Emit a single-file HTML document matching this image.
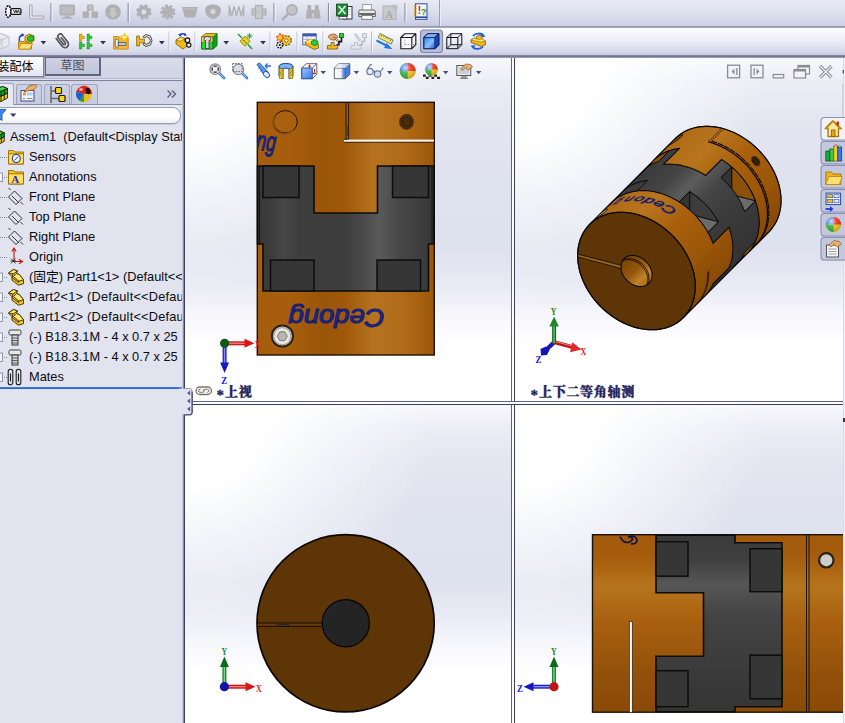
<!DOCTYPE html>
<html lang="zh">
<head>
<meta charset="utf-8">
<title>Assem1 - SolidWorks</title>
<style>
*{box-sizing:border-box;margin:0;padding:0}
html,body{width:845px;height:723px;overflow:hidden;background:#fff}
body{position:relative;font-family:"Liberation Sans","Noto Sans CJK SC",sans-serif;font-size:13px;color:#101010}
.abs{position:absolute}
#tb1{left:0;top:0;width:845px;height:27px;background:linear-gradient(#e7e9f3 0,#dfe2ef 40%,#d3d6e8 85%,#cdd0e4 100%)}
#tb1l{left:0;top:0;width:440px;height:27px;background:linear-gradient(#e8eaf4 0,#dcdfee 40%,#cbcfe3 85%,#c2c6dc 100%)}
#tb1b{left:0;top:26px;width:845px;height:2px;background:linear-gradient(#a9abc0,#85879a 50%,#c9cbda)}
#tb2{left:0;top:28px;width:845px;height:28px;background:linear-gradient(#fdfdff 0,#eceef7 45%,#d5d8e9 85%,#c6c9de 100%)}
#tb2b{left:0;top:55px;width:845px;height:3px;background:linear-gradient(#8a8da8,#6f728f 60%,#b5b8cf)}
#left{left:0;top:58px;width:183px;height:665px;background:#e1e4ee;overflow:hidden}
#leftedge{left:182px;top:58px;width:3px;height:665px;background:linear-gradient(90deg,#d9dcea 0,#b4b7cc 35%,#6d7090 60%,#3d405c 80%,#3a3d58 100%)}
.vp{overflow:hidden;background:radial-gradient(circle 250px at 0 0,#fff 0,rgba(255,255,255,.95) 35%,rgba(255,255,255,.55) 60%,rgba(255,255,255,0) 100%),linear-gradient(180deg,#f7f8fc 0,#eceef6 7%,#e3e6f1 18%,#dfe2ef 35%,#dee1ee 55%,#e8eaf4 66%,#f8f8fc 76%,#fff 84%)}
#vp1{left:185px;top:58px;width:326px;height:343px}
#vp2{left:515px;top:58px;width:330px;height:343px}
#vp3{left:185px;top:405px;width:326px;height:318px}
#vp4{left:515px;top:405px;width:330px;height:318px}
.sep{background:#fff}
.trow{position:absolute;left:0;height:20px;line-height:20px;white-space:nowrap;font-size:12.8px;color:#0a0a14;letter-spacing:0}
.vlabel{position:absolute;font-family:"Liberation Serif","Noto Serif CJK SC",serif;font-weight:900;font-size:13px;letter-spacing:0.7px;color:#24245e;white-space:nowrap;line-height:16px;height:16px;-webkit-text-stroke:0.35px #24245e}
.ast{display:inline-block;font-size:15px;position:relative;top:3.5px;letter-spacing:1px}
</style>
</head>
<body>
<!-- ===== toolbars ===== -->
<div id="tb1" class="abs"></div>
<div id="tb1l" class="abs"></div>
<div id="tb1b" class="abs"></div>
<div id="tb2" class="abs"></div>
<div id="tb2b" class="abs"></div>
<svg class="abs" style="left:0;top:0" width="845" height="27" viewBox="0 0 845 27">
<g transform="translate(4.5 5)"><ellipse cx="3.8" cy="6.5" rx="2.6" ry="5.8" fill="#f4f4f8" stroke="#111" stroke-width="1.4" stroke-dasharray="2.2 0.8"/>
<rect x="6.4" y="3.6" width="10" height="5.8" rx="1.2" fill="#f4f4f8" stroke="#111" stroke-width="1.3"/>
<path d="M9 5.2l1.200 2.600l1.200-2.600l1.200 2.600l1.200-2.600l1.200 2.600" stroke="#111" stroke-width="0.9" fill="none"/></g>
<g transform="translate(28 4)"><path d="M1.5 1h2.600v11h11.500v2.800h-14.100z" fill="#e2e3ec" stroke="#aaa" stroke-width="1"/></g>
<path d="M51 3V22" stroke="#8f8f9c" stroke-width="1.2"/><path d="M52.2 3V22" stroke="#f4f5fa" stroke-width="1"/>
<g transform="translate(59 4)"><rect x="0.5" y="0.5" width="15.5" height="11" rx="1" fill="#b0b0b3"/><rect x="2.5" y="2.3" width="11.5" height="7.2" fill="#bcbcbe"/><rect x="6" y="11.500" width="4.500" height="2" fill="#b0b0b3"/><rect x="3" y="13.300" width="10.500" height="1.600" fill="#b0b0b3"/></g>
<g transform="translate(82 4)"><g fill="#b0b0b3"><rect x="5" y="0.5" width="6.500" height="6" rx="1"/><rect x="0.500" y="7.500" width="6.500" height="6.500" rx="1"/><rect x="9.500" y="7.500" width="6.500" height="6.500" rx="1"/><path d="M7 6l-2.500 2 M9.500 6l2.500 2" stroke="#b0b0b3" stroke-width="1.600"/></g><rect x="6.500" y="2" width="3.500" height="3" fill="#c4c4c6"/></g>
<g transform="translate(105 4)"><circle cx="8" cy="8" r="7.8" fill="#b0b0b3"/><path d="M5.500 4h5v5h2.500l-5 5l-5-5h2.500z" fill="#c6c6c8"/></g>
<path d="M128.2 3V22" stroke="#8f8f9c" stroke-width="1.2"/><path d="M129.39999999999998 3V22" stroke="#f4f5fa" stroke-width="1"/>
<g transform="translate(136 4)"><circle cx="7.800" cy="8" r="5.400" fill="none" stroke="#b0b0b3" stroke-width="4.600" stroke-dasharray="2.600 1.640"/><circle cx="7.800" cy="8" r="4.300" fill="none" stroke="#b0b0b3" stroke-width="3.600"/></g>
<g transform="translate(160 4)"><circle cx="7.800" cy="8" r="5.600" fill="#b0b0b3" stroke="#b0b0b3" stroke-width="4" stroke-dasharray="2.400 1.500"/><circle cx="6" cy="6" r="1" fill="#bdbdc0"/><circle cx="10" cy="9" r="1" fill="#bdbdc0"/><circle cx="6.500" cy="11" r="1" fill="#bdbdc0"/></g>
<g transform="translate(182 7)"><path d="M0 0h16l-2.800 10.500h-10.400z" fill="#b0b0b3"/><path d="M1.500 2h13" stroke="#c2c2c4" stroke-width="1"/></g>
<g transform="translate(205 4)"><path d="M8 0.500c5 0 8 2.600 8 6c0 4-4.500 8.500-8 8.500s-8-4.500-8-8.500c0-3.400 3-6 8-6z" fill="#b0b0b3"/><path d="M8 5a2.600 2.600 0 0 1 2.600 2.600c0 1.600-1.300 2.800-2.600 2.800s-2.600-1.200-2.600-2.800a2.600 2.600 0 0 1 2.600-2.600z" fill="#d8d8dc"/></g>
<g transform="translate(228.5 5.5)"><path d="M0.800 0v11 M0.800 1l2.400 9.500l2.400-9.500l2.400 9.500l2.400-9.500l2.400 9.500l2.400-9.500 M15.200 0v11" stroke="#b0b0b3" stroke-width="1.300" fill="none"/></g>
<g transform="translate(251.5 5)"><rect x="4" y="0.500" width="7" height="13" fill="#c8c8ca" stroke="#b0b0b3" stroke-width="1.200"/><rect x="0.600" y="4" width="3.400" height="6" fill="#c8c8ca" stroke="#b0b0b3" stroke-width="1.200"/><rect x="11" y="4" width="3.400" height="6" fill="#c8c8ca" stroke="#b0b0b3" stroke-width="1.200"/><path d="M0 7h15.500" stroke="#b0b0b3" stroke-width="0.800" stroke-dasharray="2 1"/></g>
<path d="M274 3V22" stroke="#8f8f9c" stroke-width="1.2"/><path d="M275.2 3V22" stroke="#f4f5fa" stroke-width="1"/>
<g transform="translate(282 4)"><circle cx="10" cy="6" r="5" fill="#c4c4c8" stroke="#b0b0b3" stroke-width="2"/><path d="M6 10l-5 5" stroke="#b0b0b3" stroke-width="2.800" stroke-linecap="round"/></g>
<g transform="translate(305 4)"><g fill="#b0b0b3"><rect x="2.500" y="1" width="3.600" height="5" rx="1"/><rect x="10" y="1" width="3.600" height="5" rx="1"/><path d="M1.800 5.500h5l1 9h-7z M9.300 5.500h5l1.500 9h-7z"/><rect x="6.500" y="6" width="3" height="3.500"/></g></g>
<path d="M328.5 3V22" stroke="#8f8f9c" stroke-width="1.2"/><path d="M329.7 3V22" stroke="#f4f5fa" stroke-width="1"/>
<g transform="translate(336 3.5)"><rect x="7" y="3" width="9" height="12.500" fill="#fff" stroke="#222" stroke-width="0.900"/><path d="M9 6h5.500 M9 8.500h5.500 M9 11h5.500" stroke="#c8a8d8" stroke-width="0.800"/>
<rect x="0.600" y="0.600" width="10.800" height="11.800" fill="#1f8a3a" stroke="#0a4a1a" stroke-width="0.900"/>
<path d="M2.500 2.500l7 8 M9.500 2.500l-7 8" stroke="#d8f8d8" stroke-width="1.700"/><rect x="3" y="13" width="8" height="2.500" fill="#fff" stroke="#222" stroke-width="0.700"/></g>
<g transform="translate(358.8 4)"><rect x="4" y="0.500" width="8.500" height="6" fill="#fff" stroke="#888" stroke-width="0.800"/>
<path d="M1.500 6h13.500a1.500 1.500 0 0 1 1.500 1.500v5h-16.500v-5a1.500 1.500 0 0 1 1.500-1.500z" fill="#e8e8ec" stroke="#555" stroke-width="0.900"/>
<path d="M0.500 10h15.500" stroke="#333" stroke-width="1.400"/><rect x="3" y="11.500" width="10.500" height="3.800" fill="#fafafa" stroke="#666" stroke-width="0.800"/></g>
<g transform="translate(382.5 4)"><rect x="0.500" y="2" width="13" height="13.500" fill="#c9c9cc" stroke="#b0b0b3" stroke-width="1"/><text x="3" y="13.500" font-family="Liberation Serif,serif" font-size="10.500" fill="#9a9a9e">A</text><path d="M10 0.500l5 5 M15 0.500l-5 5 M12.500 0v6 M9.500 3h6" stroke="#b4b4b8" stroke-width="0.700"/></g>
<path d="M405 3V22" stroke="#8f8f9c" stroke-width="1.2"/><path d="M406.2 3V22" stroke="#f4f5fa" stroke-width="1"/>
<g transform="translate(413.5 3)"><rect x="2" y="0.800" width="11.500" height="15.500" fill="#f4f6ff" stroke="#2a4a9a" stroke-width="1"/><path d="M2 14.200h11.500" stroke="#2a4a9a" stroke-width="1.600"/>
<path d="M0.600 3h2.400 M0.600 5.500h2.400 M0.600 8h2.400 M0.600 10.500h2.400 M0.600 13h2.400" stroke="#c88a10" stroke-width="1.300"/>
<text x="4.200" y="10.500" font-family="Liberation Sans,sans-serif" font-weight="bold" font-size="10.500" fill="#e01818">!</text><text x="7.300" y="12" font-family="Liberation Sans,sans-serif" font-weight="bold" font-size="9.500" fill="#18a018">?</text></g>
<path d="M439.500 0V26" stroke="#9c9fb8" stroke-width="1"/><path d="M440.500 0V26" stroke="#eceef6" stroke-width="1"/>
</svg>
<svg class="abs" style="left:0;top:28px" width="845" height="28" viewBox="0 28 845 28">
<g transform="translate(-6 33)"><g stroke="#c2c2c8" stroke-width="1" fill="#e9e9ee"><path d="M0 4l7-3.5l8 3v8.5l-7 4l-8-3.5z"/><path d="M0 4l8 3l7-3.5 M8 7v9" fill="none"/><rect x="2.5" y="7" width="3.5" height="4" fill="#d4d4da"/></g></g>
<g transform="translate(18 33)"><path d="M0.5 8.5h5.5l1.2 1.5h6.3v6h-13z" fill="#f0b020" stroke="#a87408" stroke-width="0.8"/>
<path d="M0.5 16l2.5-5.5h11.5l-2.5 5.5z" fill="#ffdf70" stroke="#c08a10" stroke-width="0.8"/>
<path d="M7 3.5l4-2.5l5 1.8v5l-4 2.6l-5-2z" fill="#f0c020" stroke="#7a5a08" stroke-width="0.8"/>
<path d="M9.5 4.2l3-1.6l3 1.2v3l-3 1.7l-3-1.2z" fill="#20c830" stroke="#0a6a14" stroke-width="0.7"/>
<path d="M1.5 8c-0.8-3.5 0.5-5.5 3.2-6.2" stroke="#1a3ae0" stroke-width="1.5" fill="none"/><path d="M3.6 0l3 2l-3 2z" fill="#1a3ae0"/></g>
<path d="M40.6 41h5.6l-2.8 3.4z" fill="#2e2e5e"/>
<g transform="translate(55 33)"><g transform="rotate(-38 7.5 8)"><path d="M4 1.5v10.5a3.5 3.5 0 0 0 7 0v-9a2.4 2.4 0 0 0-4.8 0v8a1.2 1.2 0 0 0 2.4 0v-7" fill="none" stroke="#2a2a2a" stroke-width="1.5"/><path d="M4 1.5v10.5a3.5 3.5 0 0 0 7 0v-9a2.4 2.4 0 0 0-4.8 0v8a1.2 1.2 0 0 0 2.4 0v-7" fill="none" stroke="#9a9a9a" stroke-width="0.5"/></g></g>
<g transform="translate(78.5 33)"><g><path d="M1 1h2.2v2.2h2.6v2.4h-2.6v2.4h-2.2z" fill="#f0b818" stroke="#8a6408" stroke-width="0.5"/>
<path d="M8.6 1h2.2v2.2h2.6v2.4h-2.6v2.4h-2.2z" fill="#20d030" stroke="#0a7a14" stroke-width="0.5"/>
<path d="M1 9h2.2v2.2h2.6v2.4h-2.6v2.4h-2.2z" fill="#20d030" stroke="#0a7a14" stroke-width="0.5"/>
<path d="M8.6 9h2.2v2.2h2.6v2.4h-2.6v2.4h-2.2z" fill="#20d030" stroke="#0a7a14" stroke-width="0.5"/></g></g>
<path d="M100.2 41h5.6l-2.8 3.4z" fill="#2e2e5e"/>
<g transform="translate(113 33)"><path d="M0.6 3.5h5l1.2 1.6h8.4v11h-14.6z" fill="#f6b838" stroke="#c88a10" stroke-width="0.9"/>
<rect x="2.2" y="6.2" width="3.2" height="8" rx="1" fill="#e8e8ee" stroke="#555" stroke-width="0.8"/>
<rect x="5.4" y="9.5" width="7.6" height="3" fill="#c8c8d0" stroke="#555" stroke-width="0.8"/>
<path d="M11.5 0.2l1.2 2.6l2.8 0.3l-2.1 1.9l0.6 2.8l-2.5-1.5l-2.5 1.5l0.6-2.8l-2.1-1.9l2.8-0.3z" fill="#fff060" stroke="#e8a800" stroke-width="0.7"/></g>
<g transform="translate(136 33)"><path d="M0.6 3h2.8v3.2h5v3.6h-5v3.2h-2.8z" fill="#f0b818" stroke="#8a6408" stroke-width="0.8"/>
<path d="M10 1.5l4.5 1.5l1.5 4.5l-1.5 4.5l-4.5 1.5l-3-2l1-1.5a3.6 3.6 0 1 0 0-5l-1-1.5z" fill="#e6e6ea" stroke="#3a3a3a" stroke-width="0.9"/></g>
<path d="M159 41h5.6l-2.8 3.4z" fill="#2e2e5e"/>
<path d="M169 31.5V52" stroke="#b9bcd2" stroke-width="1"/><path d="M170 31.5V52" stroke="#f6f7fb" stroke-width="1"/>
<g transform="translate(175 33)"><path d="M1 7l5-3l4 1.5l-1 2.5l3 1l0 4l-4 3l-7-5z" fill="#f0b818" stroke="#7a5808" stroke-width="0.8"/>
<path d="M1 7l5-3l4 1.5l-4.5 2.8z" fill="#ffe070" stroke="#7a5808" stroke-width="0.6"/>
<circle cx="12.5" cy="7.2" r="2.3" fill="#f4f4f4" stroke="#111" stroke-width="1.1"/><circle cx="13.8" cy="12" r="2.1" fill="#f4f4f4" stroke="#111" stroke-width="1.1"/>
<path d="M4.5 2.8c1.5-2 4-2.4 6-1.2" stroke="#1a3ae0" stroke-width="1.3" fill="none"/><path d="M9.5 0l2.6 2.2l-3.2 0.8z" fill="#1a3ae0"/><path d="M6 0.2l-3 1.6l2.6 1.8z" fill="#1a3ae0"/></g>
<path d="M195 31.5V52" stroke="#b9bcd2" stroke-width="1"/><path d="M196 31.5V52" stroke="#f6f7fb" stroke-width="1"/>
<g transform="translate(201 33)"><path d="M0.5 4l4-3.5h11.5v12l-4 3.5h-11.5z" fill="#f0c020" stroke="#7a5a08" stroke-width="0.8"/>
<path d="M0.5 4h11.5v12h-11.5z" fill="#20d830" stroke="#0a6a14" stroke-width="0.8"/>
<path d="M0.5 4h11.5v5h-11.5z" fill="#ffe060" stroke="#7a5a08" stroke-width="0.6"/>
<path d="M12 4l4-3.5v12l-4 3.5z" fill="#10a020" stroke="#0a6a14" stroke-width="0.6"/>
<path d="M3 5.5a3.3 2.2 0 0 1 6.6 0v2h-1.6v8h-3.4v-8h-1.6z" fill="#d8d8dc" stroke="#333" stroke-width="0.8"/></g>
<path d="M223.4 41h5.6l-2.8 3.4z" fill="#2e2e5e"/>
<g transform="translate(237 33)"><path d="M1 1l4 4 M11 11.5l4 4.5" stroke="#10a020" stroke-width="1.3"/>
<path d="M8 3.2l5 5l-5 5l-5-5z" fill="#f4d020" stroke="#8a7408" stroke-width="0.9"/>
<path d="M6.3 7l1.3 1.3 M8.4 9.1l1.3 1.3" stroke="#10a020" stroke-width="1.2"/>
<path d="M12.5 0v6 M9.5 3h6 M10.4 0.9l4.2 4.2 M14.6 0.9l-4.2 4.2" stroke="#10a020" stroke-width="0.8"/></g>
<path d="M260.2 41h5.6l-2.8 3.4z" fill="#2e2e5e"/>
<path d="M270 31.5V52" stroke="#b9bcd2" stroke-width="1"/><path d="M271 31.5V52" stroke="#f6f7fb" stroke-width="1"/>
<g transform="translate(276 33)"><circle cx="10.5" cy="7.5" r="4.6" fill="#f0b818" stroke="#7a5808" stroke-width="1.6" stroke-dasharray="2 1.2"/><circle cx="10.5" cy="7.5" r="4" fill="#f4c428"/><circle cx="10.5" cy="7.5" r="1.6" fill="#fff" stroke="#7a5808" stroke-width="0.8"/>
<circle cx="3.8" cy="12" r="2.9" fill="#f0f0f0" stroke="#111" stroke-width="1.5" stroke-dasharray="1.6 1"/><circle cx="3.8" cy="12" r="1" fill="#111"/>
<path d="M4 0l1 2.4l2.6-0.6l-1.4 2.2l1.8 1.8l-2.6 0.2l-0.4 2.6l-1.6-2l-2.4 1l1-2.4l-2-1.6l2.6-0.4z" fill="#ffd020" stroke="#e83818" stroke-width="0.8"/></g>
<path d="M297 31.5V52" stroke="#b9bcd2" stroke-width="1"/><path d="M298 31.5V52" stroke="#f6f7fb" stroke-width="1"/>
<g transform="translate(302 33)"><rect x="0.8" y="0.8" width="13.4" height="11" fill="#f2f4fa" stroke="#4a5a8a" stroke-width="0.9"/><rect x="0.8" y="0.8" width="13.4" height="2.6" fill="#3a5ab0"/>
<path d="M0.8 6.5h13 M0.8 9.2h13 M5 3.4v8.4" stroke="#9aa4c4" stroke-width="0.7"/>
<path d="M3.5 9l5-3l4 1.5l4 4.5v3l-4.5 1.5l-8.5-5z" fill="#f0b818" stroke="#7a5808" stroke-width="0.8"/>
<path d="M3.5 9l5-3l4 1.5l-4.5 2.8z" fill="#ffe070"/>
<path d="M9.5 8.2l3-1.4l3.4 1.4v3l-3 1.5l-3.4-1.5z" fill="#20d030" stroke="#0a6a14" stroke-width="0.7"/></g>
<path d="M323 31.5V52" stroke="#b9bcd2" stroke-width="1"/><path d="M324 31.5V52" stroke="#f6f7fb" stroke-width="1"/>
<g transform="translate(327.5 33)"><path d="M0.5 3.5c2-2.5 5-3 8-2l2 2.2l-3 3.5l-4.5-0.6z" fill="#e0a870" stroke="#8a5a2a" stroke-width="0.8"/>
<path d="M6.5 4l5 5" stroke="#8a5a2a" stroke-width="2.4" stroke-dasharray="1 1"/>
<rect x="12" y="0.6" width="4" height="4" fill="#20d030" stroke="#0a6a14" stroke-width="0.8"/>
<path d="M14 4.6v4h-2.6v3.2h-2.4" stroke="#111" stroke-width="1.6" fill="none"/>
<path d="M3.5 9.5h3v3h3.5v3.5h-10v-3.5h3.5z" fill="#f0b818" stroke="#7a5808" stroke-width="0.8"/></g>
<g transform="translate(351 33)"><g opacity="0.9"><path d="M3.5 1.5l1.6-1l4.6 6.5l-1.6 1.2z" fill="#dcdce0" stroke="#b0b0b6" stroke-width="0.8"/>
<rect x="11.6" y="0.6" width="4" height="4" fill="#e4e4e8" stroke="#b0b0b6" stroke-width="0.8"/>
<path d="M13.6 4.6v4h-2.6v3.2h-2.4" stroke="#b4b4ba" stroke-width="1.5" fill="none"/>
<path d="M3.5 9.5h3v3h3.5v3.5h-10v-3.5h3.5z" fill="#e4e4e8" stroke="#b0b0b6" stroke-width="0.8"/></g></g>
<path d="M371.5 31.5V52" stroke="#b9bcd2" stroke-width="1"/><path d="M372.5 31.5V52" stroke="#f6f7fb" stroke-width="1"/>
<g transform="translate(376 33)"><path d="M4 0.5l13 6.5l-1.8 4l-13-6.5z" fill="#f8f080" stroke="#6a6420" stroke-width="0.8"/>
<path d="M6 2l-0.8 1.8 M8.2 3.1l-0.6 1.3 M10.4 4.2l-0.8 1.8 M12.6 5.3l-0.6 1.3 M14.8 6.4l-0.8 1.8" stroke="#333" stroke-width="0.7"/>
<path d="M0.5 7.5l12 6" stroke="#1a78e8" stroke-width="2"/><path d="M10.5 10l6 6.2l-8.4-1.2z" fill="#1a78e8"/></g>
<g transform="translate(400 33)"><path d="M0.8 4.5l4-3.8h11v11l-4 4h-11z M0.8 4.5h11v11.2 M11.8 4.5l4-3.8" fill="#fdfdff" stroke="#111" stroke-width="1.1" stroke-linejoin="round"/>
<path d="M4.8 1v10.5h10.8 M4.8 11.5l-4 4" stroke="#888" stroke-width="0.8" stroke-dasharray="1.5 1.2" fill="none"/></g>
<rect x="420.5" y="30" width="22" height="22.5" rx="3" fill="#b9bcd9" stroke="#8487a8" stroke-width="1.1"/>
<g transform="translate(423 33)"><path d="M0.8 4.5l4-3.8h11v11l-4 4h-11z" fill="#2a70e0" stroke="#0a1a4a" stroke-width="1.1" stroke-linejoin="round"/>
<path d="M0.8 4.5l4-3.8h11l-4 3.8z" fill="#7ab4ff" stroke="#0a1a4a" stroke-width="0.8"/>
<path d="M11.8 4.5l4-3.8v11l-4 4z" fill="#1a48c0" stroke="#0a1a4a" stroke-width="0.8"/>
<rect x="1.6" y="5.2" width="9.6" height="9.8" fill="url(#cubef)"/></g>
<defs><linearGradient id="cubef" x1="0" y1="0" x2="1" y2="1"><stop offset="0" stop-color="#3a86f0"/><stop offset="0.55" stop-color="#8cc0ff"/><stop offset="1" stop-color="#2a6ae0"/></linearGradient></defs>
<g transform="translate(446 33)"><path d="M0.8 4.5l4-3.8h11v11l-4 4h-11z M0.8 4.5h11v11.2 M11.8 4.5l4-3.8 M4.8 0.7v11h11 M4.8 11.7l-4 4" fill="none" stroke="#111" stroke-width="1" stroke-linejoin="round"/></g>
<g transform="translate(470 33)"><path d="M3 3c2.5-3 8-3.4 10.5-0.5" stroke="#1a60e8" stroke-width="1.8" fill="none"/><path d="M12 0l3.5 3.8l-4.6 0.8z" fill="#1a60e8"/>
<path d="M13 13.5c-2.5 3-8 3.4-10.500.5" stroke="#1a60e8" stroke-width="1.8" fill="none"/><path d="M4 16.5l-3.500-3.800l4.600-0.800z" fill="#1a60e8"/>
<path d="M1 7l3.500-2l2 0.800v-2.300l3-1.500l2.500 1v4l3.500 1.500v3l-4 2l-10.500-4z" fill="#f0b818" stroke="#7a5808" stroke-width="0.8"/>
<path d="M1 7l3.500-2l2 0.800l2.500 1l2.500-1l4 1.700l-4 1.800z" fill="#ffe070" stroke="#7a5808" stroke-width="0.5"/></g>
</svg>

<!-- ===== left panel ===== -->
<div id="left" class="abs"></div>
<!-- tab strip -->
<div class="abs" style="left:0;top:58px;width:183px;height:21px;background:linear-gradient(#d9dcea,#cfd3e5)"></div>
<div class="abs" style="left:-2px;top:57px;width:46px;height:20px;background:linear-gradient(#ffffff,#f4f5fa 50%,#e4e6f0);border-right:1.5px solid #7d809b;border-bottom:1.5px solid #7d809b;box-shadow:1px 1px 1px #a5a8c0"></div>
<div class="abs" style="left:-2.5px;top:58px;width:46px;height:18px;line-height:18px;font-size:12px;color:#000;white-space:nowrap;letter-spacing:0">装配体</div>
<div class="abs" style="left:44.5px;top:56.5px;width:56px;height:19.5px;background:linear-gradient(#cdd0e3,#c2c6dc);border:1.6px solid #62657f;border-right-width:2.2px;border-bottom-width:2.2px;border-top-width:1.3px"></div>
<div class="abs" style="left:44.5px;top:57px;width:56px;height:18px;line-height:18px;font-size:12px;color:#4d4d55;text-align:center;white-space:nowrap">草图</div>
<div class="abs" style="left:0;top:78px;width:183px;height:1px;background:#b4b7cd"></div>
<div class="abs" style="left:0;top:80px;width:183px;height:1.2px;background:#7f829d"></div>
<!-- manager tabs -->
<div class="abs" style="left:0;top:81px;width:183px;height:24px;background:#d3d6e7"></div>
<div class="abs" style="left:-4px;top:83px;width:18px;height:22px;background:#e6e8f2;border:1px solid #a3a6c0;border-bottom:none;border-radius:3px 3px 0 0"></div>
<div class="abs" style="left:15.5px;top:83.5px;width:26.5px;height:21px;background:linear-gradient(#cdd1e4,#c5c9de);border:1px solid #9fa3bd;border-bottom:none;border-radius:3px 3px 0 0"></div>
<div class="abs" style="left:43.5px;top:83.5px;width:26px;height:21px;background:linear-gradient(#cdd1e4,#c5c9de);border:1px solid #9fa3bd;border-bottom:none;border-radius:3px 3px 0 0"></div>
<div class="abs" style="left:71px;top:83.5px;width:27px;height:21px;background:linear-gradient(#cdd1e4,#c5c9de);border:1px solid #9fa3bd;border-bottom:none;border-radius:3px 3px 0 0"></div>
<div class="abs" style="left:14px;top:104px;width:169px;height:1.3px;background:#8a8da8"></div>
<div class="abs" style="left:0;top:105px;width:183px;height:2px;background:#e9ebf4"></div>
<svg class="abs" style="left:0;top:81px;overflow:visible" width="183" height="25" viewBox="0 81 183 25">
<!-- tab1: assembly cubes (cut) -->
<g stroke="#14200a" stroke-width="0.9" stroke-linejoin="round"><path d="M-4.0 89.0 L2.5 86.5 L7.5 88.5 L7.5 98.0 L1.0 101.5 L-4.0 99.5Z" fill="#f2c812"/><path d="M-4.0 89.0 L2.5 86.5 L7.5 88.5 L1.0 91.5Z" fill="#48d848"/><path d="M1.0 91.5 L7.5 88.5 L7.5 93.0 L1.0 96.3Z" fill="#18a820"/><path d="M-4.0 89.0 L1.0 91.5 L1.0 96.3 L-4.0 94.0Z" fill="#28c030"/><path d="M1.0 96.3 L1.0 101.5 M-4.0 94.0 L1.0 96.3 L7.5 93.0 M4.3 90.0 L4.3 99.7" fill="none"/></g>
<!-- tab2: property manager -->
<rect x="21" y="90.5" width="13" height="10.5" fill="#f2f4fa" stroke="#3c4a8a" stroke-width="1"/>
<rect x="23" y="92.5" width="3" height="3" fill="#e8a020"/><rect x="27" y="92.5" width="5.5" height="3" fill="#a8d0ee"/>
<path d="M23 98.5h2 M27 98.5h5.5" stroke="#888" stroke-width="1.2"/>
<path d="M24 92 l5 -6 l6 -1.5 l2 2 l-3.5 3.5 l-4 0.5z" fill="#e9b36a" stroke="#8a5a1a" stroke-width="0.8"/>
<!-- tab3: config manager -->
<path d="M51 86v17 M51 91h5 M51 98.5h8" stroke="#6a6a6a" stroke-width="1.6" fill="none"/>
<rect x="55.5" y="87.5" width="6" height="6" rx="1" fill="#ffd814" stroke="#1a1a1a" stroke-width="1.2"/>
<rect x="59" y="95.5" width="6" height="6" rx="1" fill="#ffd814" stroke="#1a1a1a" stroke-width="1.2"/>
<!-- tab4: appearance ball -->
<circle cx="84" cy="94" r="8" fill="#e8c020"/>
<path d="M84 94 L76.3 91.5 A8 8 0 0 1 88 87z" fill="#e02020"/>
<path d="M84 94 L76.3 91.5 A8 8 0 0 0 80 101z" fill="#2060d8"/>
<path d="M84 94 L80 101 A8 8 0 0 0 84 102z" fill="#30a030"/>
<path d="M84 94 L88 87 A8 8 0 0 1 92 94 z" fill="#d02818"/>
<ellipse cx="88" cy="91" rx="2.2" ry="3.2" transform="rotate(-25 88 91)" fill="#1a0a0a"/>
<ellipse cx="81" cy="89.5" rx="2" ry="1.2" fill="#fff" opacity="0.7"/>
<!-- chevrons -->
<path d="M167.5 90.5l3.5 3.5l-3.5 3.5 M172 90.5l3.5 3.5l-3.5 3.5" stroke="#555a78" stroke-width="1.3" fill="none"/>
</svg>
<!-- filter row -->
<div class="abs" style="left:-12px;top:107px;width:193px;height:17px;background:linear-gradient(#fff,#fff 60%,#eef0f6);border:1px solid #9a9db5;border-radius:8px;box-shadow:0 1px 0 #c8cadb"></div>
<svg class="abs" style="left:0;top:107px;overflow:visible" width="30" height="17" viewBox="0 107 30 17">
<path d="M-4 109.5h10l-4 5v6l-3 -2v-4z" fill="#3a8af0" stroke="#1a4ab0" stroke-width="0.8"/>
<path d="M10 113.5h6.4l-3.2 3.6z" fill="#3a3a6a"/>
</svg>
<!-- tree -->
<div class="trow" style="top:127px;left:10px">Assem1&nbsp; (Default&lt;Display Stat</div>
<div class="trow" style="top:147px;left:29px">Sensors</div>
<div class="trow" style="top:167px;left:29px">Annotations</div>
<div class="trow" style="top:187px;left:29px">Front Plane</div>
<div class="trow" style="top:207px;left:29px">Top Plane</div>
<div class="trow" style="top:227px;left:29px">Right Plane</div>
<div class="trow" style="top:247px;left:29px">Origin</div>
<div class="trow" style="top:267px;left:29px">(固定) Part1&lt;1&gt; (Default&lt;&lt;</div>
<div class="trow" style="top:287px;left:29px;letter-spacing:0.2px">Part2&lt;1&gt; (Default&lt;&lt;Defau</div>
<div class="trow" style="top:307px;left:29px;letter-spacing:0.2px">Part1&lt;2&gt; (Default&lt;&lt;Defau</div>
<div class="trow" style="top:327px;left:29px">(-) B18.3.1M - 4 x 0.7 x 25</div>
<div class="trow" style="top:347px;left:29px">(-) B18.3.1M - 4 x 0.7 x 25</div>
<div class="trow" style="top:367px;left:29px">Mates</div>
<svg class="abs" style="left:0;top:125px;overflow:visible" width="30" height="262" viewBox="0 125 30 262">
<path d="M0 157.5H8" stroke="#8a8a96" stroke-width="1" stroke-dasharray="1 1"/>
<path d="M0 177.5H8" stroke="#8a8a96" stroke-width="1" stroke-dasharray="1 1"/>
<path d="M0 197.5H8" stroke="#8a8a96" stroke-width="1" stroke-dasharray="1 1"/>
<path d="M0 217.5H8" stroke="#8a8a96" stroke-width="1" stroke-dasharray="1 1"/>
<path d="M0 237.5H8" stroke="#8a8a96" stroke-width="1" stroke-dasharray="1 1"/>
<path d="M0 257.5H8" stroke="#8a8a96" stroke-width="1" stroke-dasharray="1 1"/>
<path d="M0 277.5H8" stroke="#8a8a96" stroke-width="1" stroke-dasharray="1 1"/>
<path d="M0 297.5H8" stroke="#8a8a96" stroke-width="1" stroke-dasharray="1 1"/>
<path d="M0 317.5H8" stroke="#8a8a96" stroke-width="1" stroke-dasharray="1 1"/>
<path d="M0 337.5H8" stroke="#8a8a96" stroke-width="1" stroke-dasharray="1 1"/>
<path d="M0 357.5H8" stroke="#8a8a96" stroke-width="1" stroke-dasharray="1 1"/>
<path d="M0 377.5H8" stroke="#8a8a96" stroke-width="1" stroke-dasharray="1 1"/>
<rect x="-5.5" y="173" width="8" height="8.5" fill="#f4f5fa" stroke="#8a8da0" stroke-width="0.9"/>
<rect x="-5.5" y="273" width="8" height="8.5" fill="#f4f5fa" stroke="#8a8da0" stroke-width="0.9"/>
<rect x="-5.5" y="293" width="8" height="8.5" fill="#f4f5fa" stroke="#8a8da0" stroke-width="0.9"/>
<rect x="-5.5" y="313" width="8" height="8.5" fill="#f4f5fa" stroke="#8a8da0" stroke-width="0.9"/>
<rect x="-5.5" y="333" width="8" height="8.5" fill="#f4f5fa" stroke="#8a8da0" stroke-width="0.9"/>
<rect x="-5.5" y="353" width="8" height="8.5" fill="#f4f5fa" stroke="#8a8da0" stroke-width="0.9"/>
<rect x="-5.5" y="373" width="8" height="8.5" fill="#f4f5fa" stroke="#8a8da0" stroke-width="0.9"/>
<g stroke="#14200a" stroke-width="0.9" stroke-linejoin="round"><path d="M-6.1 133.2 L-0.2 131.0 L4.2 132.8 L4.2 141.3 L-1.6 144.5 L-6.1 142.7Z" fill="#f2c812"/><path d="M-6.1 133.2 L-0.2 131.0 L4.2 132.8 L-1.6 135.5Z" fill="#48d848"/><path d="M-1.6 135.5 L4.2 132.8 L4.2 136.8 L-1.6 139.8Z" fill="#18a820"/><path d="M-6.1 133.2 L-1.6 135.5 L-1.6 139.8 L-6.1 137.8Z" fill="#28c030"/><path d="M-1.6 139.8 L-1.6 144.5 M-6.1 137.8 L-1.6 139.8 L4.2 136.8 M1.4 134.2 L1.4 142.9" fill="none"/></g>
<path d="M8.5 150.5 h5 l1.5 1.5 h8.5 v12 h-15z" fill="#f7c81c" stroke="#9a6a08" stroke-width="0.9"/><path d="M8.5 153.8 h15 v10.2 h-15z" fill="#ffe05a" stroke="#9a6a08" stroke-width="0.9"/>
<circle cx="16.3" cy="158.5" r="4" fill="#f4f8ff" stroke="#1a3ab0" stroke-width="1.1"/><path d="M14.3 160.5l4-4" stroke="#1a3ab0" stroke-width="1"/>
<path d="M8.5 170.5 h5 l1.5 1.5 h8.5 v12 h-15z" fill="#f7c81c" stroke="#9a6a08" stroke-width="0.9"/><path d="M8.5 173.8 h15 v10.2 h-15z" fill="#ffe05a" stroke="#9a6a08" stroke-width="0.9"/>
<text x="11.2" y="183.2" font-family="Liberation Serif,serif" font-weight="bold" font-size="11" fill="#1a2ad0">A</text>
<path d="M8.5 197 L14.5 191 L22 198.5 L16 204.5Z M12 196 L18.5 202.5 M20.5 202 L23 204.5 M10.5 190 L8.5 188" fill="none" stroke="#1a1a1a" stroke-width="0.9"/>
<path d="M8.5 217 L14.5 211 L22 218.5 L16 224.5Z M12 216 L18.5 222.5 M20.5 222 L23 224.5 M10.5 210 L8.5 208" fill="none" stroke="#1a1a1a" stroke-width="0.9"/>
<path d="M8.5 237 L14.5 231 L22 238.5 L16 244.5Z M12 236 L18.5 242.5 M20.5 242 L23 244.5 M10.5 230 L8.5 228" fill="none" stroke="#1a1a1a" stroke-width="0.9"/>
<path d="M14 248.5 V261 M11.8 251.5 L14 248 L16.2 251.5" stroke="#c01818" stroke-width="1.1" fill="none"/>
<path d="M14 261.5 H22 M19 259.3 L22.5 261.5 L19 263.7" stroke="#c01818" stroke-width="1.1" fill="none"/>
<path d="M11 258.5l4.5 5 M15.5 258.5l-4.5 5 M10.5 261h5.5" stroke="#1a1a1a" stroke-width="0.8"/>
<g stroke="#3a2a04" stroke-width="0.9" stroke-linejoin="round"><path d="M8.5 273 l5 -3.5 l4 1.5 l-1 2.5 l3 1.2 l4 5 v4 l-5 1.5 l-6.5 -5 v-3.5z" fill="#f5c518"/><path d="M8.5 273 l5 -3.5 l4 1.5 l-4.5 3z M16.5 273.5 l3 1.2 l4 5 l-4.5 1.6 l-5.5 -4.8z" fill="#ffe878"/><path d="M13 274 l-1 3.5 l6.5 5 l0.5 -2" fill="none"/></g>
<g stroke="#3a2a04" stroke-width="0.9" stroke-linejoin="round"><path d="M8.5 293 l5 -3.5 l4 1.5 l-1 2.5 l3 1.2 l4 5 v4 l-5 1.5 l-6.5 -5 v-3.5z" fill="#f5c518"/><path d="M8.5 293 l5 -3.5 l4 1.5 l-4.5 3z M16.5 293.5 l3 1.2 l4 5 l-4.5 1.6 l-5.5 -4.8z" fill="#ffe878"/><path d="M13 294 l-1 3.5 l6.5 5 l0.5 -2" fill="none"/></g>
<g stroke="#3a2a04" stroke-width="0.9" stroke-linejoin="round"><path d="M8.5 313 l5 -3.5 l4 1.5 l-1 2.5 l3 1.2 l4 5 v4 l-5 1.5 l-6.5 -5 v-3.5z" fill="#f5c518"/><path d="M8.5 313 l5 -3.5 l4 1.5 l-4.5 3z M16.5 313.5 l3 1.2 l4 5 l-4.5 1.6 l-5.5 -4.8z" fill="#ffe878"/><path d="M13 314 l-1 3.5 l6.5 5 l0.5 -2" fill="none"/></g>
<g stroke="#2a2a2a" stroke-width="0.9"><rect x="9" y="330" width="12" height="5" rx="1.5" fill="#e8e8e8"/><rect x="12" y="335" width="6" height="10" fill="#d8d8d8"/><path d="M12 338h6 M12 340.5h6 M12 343h6" stroke-width="0.7"/></g>
<g stroke="#2a2a2a" stroke-width="0.9"><rect x="9" y="350" width="12" height="5" rx="1.5" fill="#e8e8e8"/><rect x="12" y="355" width="6" height="10" fill="#d8d8d8"/><path d="M12 358h6 M12 360.5h6 M12 363h6" stroke-width="0.7"/></g>
<path d="M8.2 372 v10.5 a2.3 2.3 0 0 0 4.6 0 v-11 a2.3 2.3 0 0 0 -4.6 0z M10.5 373.5v8" fill="none" stroke="#1a1a1a" stroke-width="1.1"/>
<path d="M16.2 372 v10.5 a2.3 2.3 0 0 0 4.6 0 v-11 a2.3 2.3 0 0 0 -4.6 0z M18.5 373.5v8" fill="none" stroke="#1a1a1a" stroke-width="1.1"/>
</svg>
<div class="abs" style="left:0;top:387px;width:183px;height:2.4px;background:linear-gradient(#4a8ae0,#1a5ac8)"></div>

<div id="leftedge" class="abs"></div>

<!-- ===== viewports ===== -->
<div id="vp1" class="abs vp"><svg class="abs" style="left:0;top:0" width="326" height="343" viewBox="185 58 326 343">
<defs>
<linearGradient id="bg1" x1="0" y1="0" x2="0" y2="1">
<stop offset="0" stop-color="#ffffff"/><stop offset="0.12" stop-color="#f3f4fa"/><stop offset="0.40" stop-color="#e1e4f0"/><stop offset="0.58" stop-color="#dfe2ef"/><stop offset="0.75" stop-color="#f1f2f9"/><stop offset="0.86" stop-color="#ffffff"/><stop offset="1" stop-color="#ffffff"/>
</linearGradient>
<linearGradient id="bg1h" x1="0" y1="0" x2="1" y2="0">
<stop offset="0" stop-color="#fff" stop-opacity="0.75"/><stop offset="0.1" stop-color="#fff" stop-opacity="0.15"/><stop offset="0.5" stop-color="#fff" stop-opacity="0"/><stop offset="1" stop-color="#fff" stop-opacity="0"/>
</linearGradient>
<linearGradient id="or1" x1="257" y1="0" x2="434" y2="0" gradientUnits="userSpaceOnUse">
<stop offset="0" stop-color="#a65d0d"/><stop offset="0.2" stop-color="#a65e0c"/><stop offset="0.36" stop-color="#9b5509"/><stop offset="0.5" stop-color="#a05809"/><stop offset="0.66" stop-color="#b67320"/><stop offset="0.84" stop-color="#b06a16"/><stop offset="1" stop-color="#9c560a"/>
</linearGradient>
<linearGradient id="gr1" x1="257" y1="0" x2="434" y2="0" gradientUnits="userSpaceOnUse">
<stop offset="0" stop-color="#383838"/><stop offset="0.08" stop-color="#3c3c3c"/><stop offset="0.15" stop-color="#474747"/><stop offset="0.24" stop-color="#3d3d3d"/><stop offset="0.5" stop-color="#3e3e3e"/><stop offset="0.6" stop-color="#4a4a4a"/><stop offset="0.69" stop-color="#5a5a5a"/><stop offset="0.8" stop-color="#484848"/><stop offset="0.92" stop-color="#3e3e3e"/><stop offset="1" stop-color="#363636"/>
</linearGradient>
</defs>
<!-- model -->
<rect x="257.300" y="102.300" width="177" height="252.700" fill="url(#or1)" stroke="#1a1208" stroke-width="1.400"/>
<!-- grey spider -->
<path d="M257.5 166 H314 V213 H377.5 V166 H434 V244 H428.5 V291 H263 V244 H257.5 Z" fill="url(#gr1)" stroke="#0c0c0c" stroke-width="1.6"/>
<g fill="#363636" stroke="#0c0c0c" stroke-width="1.5">
<rect x="263" y="166" width="36" height="31.5"/>
<rect x="392.5" y="166" width="36" height="31.5"/>
<rect x="270.5" y="260" width="43.5" height="31"/>
<rect x="377" y="260" width="43.5" height="31"/>
</g>
<path d="M259.5 166V244 M432 166V244" stroke="#0c0c0c" stroke-width="0.8" fill="none"/>
<!-- slit -->
<path d="M346 102V141 M348.6 102V139" stroke="#1a1208" stroke-width="0.9" fill="none"/>
<rect x="346.6" y="125" width="1.6" height="11" fill="#444"/>
<rect x="344" y="139.6" width="90" height="2.2" fill="#f4f4f8"/>
<path d="M344 139.3H348.6 M344 142.3H434" stroke="#2a1a08" stroke-width="0.8" fill="none"/>
<!-- hole -->
<ellipse cx="285.3" cy="121.8" rx="12" ry="11.2" fill="#a9610f" stroke="#1a1208" stroke-width="1"/>
<path d="M276 116 a11 10.5 0 0 0 17 14" stroke="#8a4a06" stroke-width="1.5" fill="none"/>
<!-- threaded hole -->
<ellipse cx="406.5" cy="121.8" rx="7" ry="7.5" fill="#4a2c08" stroke="#1a1208" stroke-width="0.8" stroke-dasharray="1.5 1"/>
<ellipse cx="406.5" cy="121.8" rx="4" ry="4.5" fill="none" stroke="#1a1208" stroke-width="0.9" stroke-dasharray="1.2 0.8"/>
<!-- ng text -->
<clipPath id="mclip"><rect x="257.5" y="102" width="177" height="253"/></clipPath>
<g clip-path="url(#mclip)"><text transform="translate(255.5 149.5) rotate(6) scale(0.66 1)" font-family="Liberation Sans,sans-serif" font-style="italic" font-size="27" fill="#1d2c9a" stroke="#141c6a" stroke-width="1.1" x="0" y="0">ng</text></g>
<!-- Cedong upside-down -->
<text transform="translate(384.5 308.5) rotate(180)" font-family="Liberation Sans,sans-serif" font-style="italic" font-size="25" fill="#1d2c9a" stroke="#141c6a" stroke-width="1.1" x="0" y="0" textLength="96" lengthAdjust="spacingAndGlyphs">Cedong</text>
<!-- bolt -->
<circle cx="282.4" cy="336" r="10.6" fill="#d9d6d0" stroke="#2a2118" stroke-width="2"/>
<circle cx="282.3" cy="336.2" r="8.6" fill="#e8e6e2" stroke="#8a8680" stroke-width="0.8"/>
<path d="M277.3 336.2 l2.5-4.4 h5 l2.5 4.4 -2.5 4.4 h-5z" fill="#b8b4ae" stroke="#6a665f" stroke-width="0.8"/>
<!-- triad -->
<g>
<rect x="226" y="341.3" width="20" height="4" fill="#d01414"/><rect x="226" y="342.6" width="20" height="1.3" fill="#f08080"/>
<path d="M244.500 338.800 L254.500 343.300 L244.500 347.800Z" fill="#d81818"/>
<rect x="222.600" y="345" width="4" height="20" fill="#2020d0"/><rect x="223.900" y="345" width="1.300" height="20" fill="#8a8af0"/>
<path d="M220.100 362.500 L224.600 373 L229.100 362.500Z" fill="#1818c0"/>
<circle cx="224.600" cy="343.300" r="4.600" fill="#0c5a14"/>
<text transform="translate(254.800 348.300) scale(0.720 1)" font-family="Liberation Serif,serif" font-weight="bold" font-size="11" fill="#f01010">X</text>
<text transform="translate(221.300 383.500) scale(0.800 1)" font-family="Liberation Serif,serif" font-weight="bold" font-size="11" fill="#1010f0">Z</text>
</g>
</svg>
</div>
<div id="vp2" class="abs vp"><svg class="abs" style="left:0;top:0" width="330" height="343" viewBox="515 58 330 343">
<defs>
<linearGradient id="bg2" x1="0" y1="0" x2="0" y2="1">
<stop offset="0" stop-color="#f4f5fa"/><stop offset="0.15" stop-color="#e9ebf5"/><stop offset="0.40" stop-color="#e1e4f0"/><stop offset="0.58" stop-color="#dfe2ef"/><stop offset="0.75" stop-color="#f1f2f9"/><stop offset="0.86" stop-color="#ffffff"/><stop offset="1" stop-color="#ffffff"/>
</linearGradient>
<radialGradient id="bg2w" cx="560" cy="90" r="230" gradientUnits="userSpaceOnUse">
<stop offset="0" stop-color="#fff" stop-opacity="1"/><stop offset="0.45" stop-color="#fff" stop-opacity="0.85"/><stop offset="1" stop-color="#fff" stop-opacity="0"/>
</radialGradient>
<linearGradient id="ior" x1="589" y1="224" x2="683" y2="318" gradientUnits="userSpaceOnUse">
<stop offset="0" stop-color="#b06a14"/><stop offset="0.22" stop-color="#b8751e"/><stop offset="0.45" stop-color="#a9600c"/><stop offset="0.75" stop-color="#9a5608"/><stop offset="1" stop-color="#874806"/>
</linearGradient>
<linearGradient id="igr" x1="589" y1="224" x2="683" y2="318" gradientUnits="userSpaceOnUse">
<stop offset="0" stop-color="#3a3a3a"/><stop offset="0.2" stop-color="#444"/><stop offset="0.33" stop-color="#5c5c5c"/><stop offset="0.48" stop-color="#444"/><stop offset="0.7" stop-color="#3a3a3a"/><stop offset="1" stop-color="#333"/>
</linearGradient>
<linearGradient id="ihole" x1="625" y1="260" x2="648" y2="284" gradientUnits="userSpaceOnUse">
<stop offset="0" stop-color="#7a4508"/><stop offset="0.45" stop-color="#94560b"/><stop offset="0.75" stop-color="#c08428"/><stop offset="1" stop-color="#a8680f"/>
</linearGradient>
</defs>
<g stroke-linejoin="round">
<path d="M769.0 231.7 L770.8 229.8 L772.4 227.7 L773.9 225.5 L775.3 223.2 L776.6 220.9 L777.7 218.4 L778.6 215.8 L779.4 213.1 L780.0 210.4 L780.5 207.6 L780.8 204.7 L781.0 201.8 L780.9 198.8 L780.8 195.8 L780.4 192.8 L779.9 189.7 L779.3 186.7 L778.5 183.6 L777.5 180.5 L776.4 177.5 L775.2 174.4 L773.8 171.4 L772.2 168.5 L770.5 165.5 L768.7 162.7 L766.8 159.9 L764.7 157.1 L762.5 154.5 L760.2 151.9 L757.8 149.4 L755.3 147.0 L752.7 144.7 L750.1 142.5 L747.3 140.5 L744.5 138.6 L741.6 136.7 L738.7 135.1 L735.7 133.5 L732.7 132.1 L729.7 130.9 L726.6 129.8 L723.6 128.8 L720.5 128.0 L717.4 127.4 L714.4 126.9 L711.3 126.6 L708.3 126.4 L705.3 126.4 L702.4 126.6 L699.6 126.9 L696.8 127.4 L694.0 128.0 L691.4 128.8 L688.8 129.7 L686.3 130.8 L683.9 132.1 L681.6 133.5 L679.5 135.0 L677.4 136.7 L675.5 138.5 L589.8 224.4 L588.0 226.3 L586.3 228.4 L584.8 230.6 L583.4 232.8 L582.2 235.2 L581.1 237.7 L580.1 240.3 L579.3 242.9 L578.7 245.7 L578.2 248.5 L577.9 251.4 L577.8 254.3 L577.8 257.2 L578.0 260.2 L578.3 263.3 L578.8 266.3 L579.4 269.4 L580.2 272.5 L581.2 275.5 L582.3 278.6 L583.6 281.6 L585.0 284.6 L586.5 287.6 L588.2 290.5 L590.0 293.4 L592.0 296.2 L594.0 299.0 L596.2 301.6 L598.5 304.2 L600.9 306.7 L603.4 309.1 L606.0 311.4 L608.7 313.5 L611.4 315.6 L614.2 317.5 L617.1 319.3 L620.0 321.0 L623.0 322.6 L626.0 324.0 L629.0 325.2 L632.1 326.3 L635.2 327.3 L638.2 328.1 L641.3 328.7 L644.4 329.2 L647.4 329.5 L650.4 329.7 L653.4 329.7 L656.3 329.5 L659.2 329.2 L662.0 328.7 L664.7 328.1 L667.4 327.3 L669.9 326.3 L672.4 325.2 L674.8 324.0 L677.1 322.6 L679.2 321.1 L681.3 319.4 L683.2 317.6Z" fill="url(#igr)" stroke="#0a0a0a" stroke-width="1.3"/>
<path d="M683.2 317.6 L685.0 315.7 L686.7 313.6 L688.2 311.4 L689.6 309.2 L690.8 306.8 L691.9 304.3 L692.9 301.7 L693.7 299.1 L694.3 296.3 L694.8 293.5 L695.1 290.6 L695.2 287.7 L695.2 284.8 L695.0 281.8 L694.7 278.7 L694.2 275.7 L693.6 272.6 L692.8 269.5 L691.8 266.5 L690.7 263.4 L689.4 260.4 L688.0 257.4 L686.5 254.4 L684.8 251.5 L683.0 248.6 L681.0 245.8 L679.0 243.0 L676.8 240.4 L674.5 237.8 L672.1 235.3 L669.6 232.9 L667.0 230.6 L664.3 228.5 L661.6 226.4 L658.8 224.5 L655.9 222.7 L653.0 221.0 L650.0 219.4 L647.0 218.0 L644.0 216.8 L640.9 215.7 L637.8 214.7 L634.8 213.9 L631.7 213.3 L628.6 212.8 L625.6 212.5 L622.6 212.3 L619.6 212.3 L616.7 212.5 L613.8 212.8 L611.0 213.3 L608.3 213.9 L605.6 214.7 L603.1 215.7 L600.6 216.8 L598.2 218.0 L595.9 219.4 L593.8 220.9 L591.7 222.6 L589.8 224.4 L611.5 202.7 L613.4 200.8 L615.5 199.1 L617.7 197.6 L620.0 196.2 L622.4 194.9 L625.0 193.8 L627.6 192.9 L630.3 192.1 L633.1 191.5 L635.9 191.0 L638.8 190.7 L641.8 190.6 L644.8 190.6 L647.9 190.8 L651.0 191.2 L654.1 191.7 L657.2 192.4 L660.3 193.2 L663.4 194.2 L666.5 195.4 L669.6 196.7 L672.6 198.2 L675.6 199.8 L678.6 201.5 L681.5 203.4 L684.3 205.4 L687.1 207.5 L689.7 209.8 L692.3 212.2 L694.8 214.6 L697.2 217.2 L699.5 219.8 L701.6 222.6 L703.7 225.4 L705.6 228.3 L707.4 231.2 L709.0 234.2 L710.5 237.2 L711.8 240.3 L713.0 243.4 L729.0 227.4 L730.0 230.5 L730.9 233.5 L731.6 236.6 L732.2 239.7 L732.6 242.7 L732.8 245.7 L732.9 248.7 L732.8 251.7 L732.6 254.6 L732.2 257.4 L731.6 260.2 L730.9 262.9 L730.0 265.5 L729.0 268.0 L713.0 284.0 L711.7 286.6 L710.3 289.1 L708.7 291.5 L706.9 293.8 L704.9 295.9Z" fill="url(#ior)" stroke="#0a0a0a" stroke-width="1.1"/>
<path d="M769.0 231.7 L770.8 229.8 L772.4 227.7 L773.9 225.5 L775.3 223.2 L776.6 220.9 L777.7 218.4 L778.6 215.8 L779.4 213.1 L780.0 210.4 L780.5 207.6 L780.8 204.7 L781.0 201.8 L780.9 198.8 L780.8 195.8 L780.4 192.8 L779.9 189.7 L779.3 186.7 L778.5 183.6 L777.5 180.5 L776.4 177.5 L775.2 174.4 L773.8 171.4 L772.2 168.5 L770.5 165.5 L768.7 162.7 L766.8 159.9 L764.7 157.1 L762.5 154.5 L760.2 151.9 L757.8 149.4 L755.3 147.0 L752.7 144.7 L750.1 142.5 L747.3 140.5 L744.5 138.6 L741.6 136.7 L738.7 135.1 L735.7 133.5 L732.7 132.1 L729.7 130.9 L726.6 129.8 L723.6 128.8 L720.5 128.0 L717.4 127.4 L714.4 126.9 L711.3 126.6 L708.3 126.4 L705.3 126.4 L702.4 126.6 L699.6 126.9 L696.8 127.4 L694.0 128.0 L691.4 128.8 L688.8 129.7 L686.3 130.8 L683.9 132.1 L681.6 133.5 L679.5 135.0 L677.4 136.7 L675.5 138.5 L653.8 160.2 L655.9 158.3 L658.0 156.6 L660.3 155.0 L662.8 153.5 L665.3 152.2 L668.0 151.1 L670.7 150.2 L673.6 149.4 L676.5 148.8 L679.5 148.4 L663.5 164.4 L666.4 164.2 L669.4 164.1 L672.4 164.2 L675.4 164.5 L678.5 164.9 L681.5 165.4 L684.6 166.2 L687.7 167.1 L690.7 168.1 L693.8 169.3 L696.8 170.6 L699.8 172.1 L702.7 173.7 L705.6 175.5 L721.6 159.5 L724.5 161.4 L727.3 163.4 L730.0 165.6 L732.7 167.9 L735.2 170.2 L737.7 172.7 L740.0 175.3 L742.3 178.0 L744.4 180.7 L746.4 183.5 L748.3 186.4 L750.0 189.4 L751.7 192.4 L753.1 195.4 L754.4 198.5 L755.6 201.6 L756.6 204.7 L757.5 207.8 L758.1 210.9 L758.7 214.0 L759.0 217.0 L759.2 220.1 L759.3 223.1 L759.1 226.1 L758.8 229.0 L758.4 231.8 L757.8 234.6 L757.0 237.3 L756.1 239.9 L755.0 242.4 L753.7 244.9 L752.3 247.2 L750.8 249.4 L749.1 251.5 L747.3 253.4Z" fill="url(#ior)" stroke="#0a0a0a" stroke-width="1.1"/>
<clipPath id="w1"><path d="M708.0 232.4 L706.3 229.4 L704.4 226.4 L702.4 223.5 L700.2 220.7 L697.9 218.0 L695.6 215.4 L693.1 212.9 L690.5 210.4 L687.8 208.1 L685.0 205.9 L682.2 203.9 L679.2 201.9 L689.7 191.4 L692.6 193.4 L695.5 195.5 L698.2 197.6 L700.9 200.0 L703.5 202.4 L706.0 204.9 L708.4 207.5 L710.7 210.3 L712.8 213.1 L714.8 215.9 L716.7 218.9 L718.5 221.9Z"/></clipPath>
<g clip-path="url(#w1)">
<path d="M708.0 232.4 L706.3 229.4 L704.4 226.4 L702.4 223.5 L700.2 220.7 L697.9 218.0 L695.6 215.4 L693.1 212.9 L690.5 210.4 L687.8 208.1 L685.0 205.9 L682.2 203.9 L679.2 201.9 L689.7 191.4 L692.6 193.4 L695.5 195.5 L698.2 197.6 L700.9 200.0 L703.5 202.4 L706.0 204.9 L708.4 207.5 L710.7 210.3 L712.8 213.1 L714.8 215.9 L716.7 218.9 L718.5 221.9Z" fill="#2a2a2a"/>
<path d="M718.5 221.9 L716.7 218.9 L714.8 215.9 L712.8 213.1 L710.7 210.3 L708.4 207.5 L706.0 204.9 L703.5 202.4 L700.9 200.0 L698.2 197.6 L695.5 195.5 L692.6 193.4 L689.7 191.4 L689.7 215.2 L693.8 215.4Z" fill="#3c3c3c" stroke="#0a0a0a" stroke-width="0.8"/>
<path d="M679.2 201.9 L689.7 191.4 L689.7 215.2 L679.2 225.7Z" fill="#343434" stroke="#0a0a0a" stroke-width="0.8"/>
<path d="M708.0 232.4 L718.5 221.9 L693.8 215.4 L683.3 225.9Z" fill="#6c6c6c" stroke="#0a0a0a" stroke-width="0.8"/>
</g>
<path d="M708.0 232.4 L706.3 229.4 L704.4 226.4 L702.4 223.5 L700.2 220.7 L697.9 218.0 L695.6 215.4 L693.1 212.9 L690.5 210.4 L687.8 208.1 L685.0 205.9 L682.2 203.9 L679.2 201.9 L689.7 191.4 L692.6 193.4 L695.5 195.5 L698.2 197.6 L700.9 200.0 L703.5 202.4 L706.0 204.9 L708.4 207.5 L710.7 210.3 L712.8 213.1 L714.8 215.9 L716.7 218.9 L718.5 221.9Z" fill="none" stroke="#0a0a0a" stroke-width="1"/>
<clipPath id="w2"><path d="M637.1 190.9 L634.2 191.3 L631.4 191.8 L628.6 192.6 L625.9 193.5 L623.3 194.5 L620.8 195.7 L618.4 197.1 L616.2 198.6 L614.0 200.3 L612.0 202.1 L610.1 204.1 L608.4 206.2 L618.8 195.7 L620.6 193.6 L622.5 191.6 L624.5 189.8 L626.6 188.2 L628.9 186.6 L631.3 185.3 L633.8 184.0 L636.4 183.0 L639.1 182.1 L641.8 181.3 L644.7 180.8 L647.6 180.4Z"/></clipPath>
<g clip-path="url(#w2)">
<path d="M637.1 190.9 L634.2 191.3 L631.4 191.8 L628.6 192.6 L625.9 193.5 L623.3 194.5 L620.8 195.7 L618.4 197.1 L616.2 198.6 L614.0 200.3 L612.0 202.1 L610.1 204.1 L608.4 206.2 L618.8 195.7 L620.6 193.6 L622.5 191.6 L624.5 189.8 L626.6 188.2 L628.9 186.6 L631.3 185.3 L633.8 184.0 L636.4 183.0 L639.1 182.1 L641.8 181.3 L644.7 180.8 L647.6 180.4Z" fill="#2a2a2a"/>
<path d="M647.6 180.4 L644.7 180.8 L641.8 181.3 L639.1 182.1 L636.4 183.0 L633.8 184.0 L631.3 185.3 L628.9 186.6 L626.6 188.2 L624.5 189.8 L622.5 191.6 L620.6 193.6 L618.8 195.7 L643.5 202.2 L647.6 204.2Z" fill="#3c3c3c" stroke="#0a0a0a" stroke-width="0.8"/>
<path d="M608.4 206.2 L618.8 195.7 L643.5 202.2 L633.0 212.6Z" fill="#6c6c6c" stroke="#0a0a0a" stroke-width="0.8"/>
</g>
<path d="M637.1 190.9 L634.2 191.3 L631.4 191.8 L628.6 192.6 L625.9 193.5 L623.3 194.5 L620.8 195.7 L618.4 197.1 L616.2 198.6 L614.0 200.3 L612.0 202.1 L610.1 204.1 L608.4 206.2 L618.8 195.7 L620.6 193.6 L622.5 191.6 L624.5 189.8 L626.6 188.2 L628.9 186.6 L631.3 185.3 L633.8 184.0 L636.4 183.0 L639.1 182.1 L641.8 181.3 L644.7 180.8 L647.6 180.4Z" fill="none" stroke="#0a0a0a" stroke-width="1"/>
<clipPath id="w3"><path d="M744.7 211.6 L743.5 208.5 L742.2 205.4 L740.7 202.3 L739.0 199.3 L737.2 196.3 L735.2 193.4 L733.2 190.5 L731.0 187.8 L728.6 185.1 L726.2 182.5 L723.7 180.0 L721.0 177.6 L731.7 167.0 L734.3 169.4 L736.8 171.8 L739.3 174.4 L741.6 177.1 L743.8 179.9 L745.9 182.7 L747.8 185.6 L749.6 188.6 L751.3 191.6 L752.8 194.7 L754.2 197.8 L755.4 200.9Z"/></clipPath>
<g clip-path="url(#w3)">
<path d="M744.7 211.6 L743.5 208.5 L742.2 205.4 L740.7 202.3 L739.0 199.3 L737.2 196.3 L735.2 193.4 L733.2 190.5 L731.0 187.8 L728.6 185.1 L726.2 182.5 L723.7 180.0 L721.0 177.6 L731.7 167.0 L734.3 169.4 L736.8 171.8 L739.3 174.4 L741.6 177.1 L743.8 179.9 L745.9 182.7 L747.8 185.6 L749.6 188.6 L751.3 191.6 L752.8 194.7 L754.2 197.8 L755.4 200.9Z" fill="#2a2a2a"/>
<path d="M755.4 200.9 L754.2 197.8 L752.8 194.7 L751.3 191.6 L749.6 188.6 L747.8 185.6 L745.9 182.7 L743.8 179.9 L741.6 177.1 L739.3 174.4 L736.8 171.8 L734.3 169.4 L731.7 167.0 L731.7 190.8 L730.7 194.5Z" fill="#8d5008" stroke="#0a0a0a" stroke-width="0.8"/>
<path d="M721.0 177.6 L731.7 167.0 L731.7 190.8 L721.0 201.4Z" fill="#343434" stroke="#0a0a0a" stroke-width="0.8"/>
<path d="M744.7 211.6 L755.4 200.9 L730.7 194.5 L720.1 205.1Z" fill="#6c6c6c" stroke="#0a0a0a" stroke-width="0.8"/>
</g>
<path d="M744.7 211.6 L743.5 208.5 L742.2 205.4 L740.7 202.3 L739.0 199.3 L737.2 196.3 L735.2 193.4 L733.2 190.5 L731.0 187.8 L728.6 185.1 L726.2 182.5 L723.7 180.0 L721.0 177.6 L731.7 167.0 L734.3 169.4 L736.8 171.8 L739.3 174.4 L741.6 177.1 L743.8 179.9 L745.9 182.7 L747.8 185.6 L749.6 188.6 L751.3 191.6 L752.8 194.7 L754.2 197.8 L755.4 200.9Z" fill="none" stroke="#0a0a0a" stroke-width="1"/>
<clipPath id="w4"><path d="M658.8 161.3 L655.9 162.3 L653.2 163.6 L650.6 165.1 L648.1 166.7 L645.8 168.5 L643.6 170.5 L641.6 172.6 L639.7 174.9 L650.3 164.2 L652.2 161.9 L654.2 159.8 L656.4 157.8 L658.8 156.0 L661.2 154.4 L663.8 153.0 L666.6 151.7 L669.4 150.6Z"/></clipPath>
<g clip-path="url(#w4)">
<path d="M658.8 161.3 L655.9 162.3 L653.2 163.6 L650.6 165.1 L648.1 166.7 L645.8 168.5 L643.6 170.5 L641.6 172.6 L639.7 174.9 L650.3 164.2 L652.2 161.9 L654.2 159.8 L656.4 157.8 L658.8 156.0 L661.2 154.4 L663.8 153.0 L666.6 151.7 L669.4 150.6Z" fill="#2a2a2a"/>
<path d="M669.4 150.6 L666.8 151.6 L664.2 152.8 L661.8 154.1 L659.5 155.5 L657.3 157.1 L655.2 158.9 L653.3 160.8 L651.5 162.8 L649.8 165.0 L648.3 167.2 L646.9 169.6 L645.7 172.1 L670.4 178.6 L669.4 174.4Z" fill="#8d5008" stroke="#0a0a0a" stroke-width="0.8"/>
<path d="M635.1 182.8 L645.7 172.1 L670.4 178.6 L659.7 189.2Z" fill="#6c6c6c" stroke="#0a0a0a" stroke-width="0.8"/>
</g>
<path d="M658.8 161.3 L655.9 162.3 L653.2 163.6 L650.6 165.1 L648.1 166.7 L645.8 168.5 L643.6 170.5 L641.6 172.6 L639.7 174.9 L650.3 164.2 L652.2 161.9 L654.2 159.8 L656.4 157.8 L658.8 156.0 L661.2 154.4 L663.8 153.0 L666.6 151.7 L669.4 150.6Z" fill="none" stroke="#0a0a0a" stroke-width="1"/>
<clipPath id="w5"><path d="M732.7 267.6 L734.8 265.8 L736.9 263.8 L738.8 261.8 L740.5 259.6 L742.1 257.2 L743.5 254.8 L744.7 252.2 L755.4 241.5 L754.1 244.1 L752.7 246.6 L751.1 248.9 L749.4 251.1 L747.5 253.2 L745.5 255.1 L743.3 256.9Z"/></clipPath>
<g clip-path="url(#w5)">
<path d="M732.7 267.6 L734.8 265.8 L736.9 263.8 L738.8 261.8 L740.5 259.6 L742.1 257.2 L743.5 254.8 L744.7 252.2 L755.4 241.5 L754.1 244.1 L752.7 246.6 L751.1 248.9 L749.4 251.1 L747.5 253.2 L745.5 255.1 L743.3 256.9Z" fill="#2a2a2a"/>
<path d="M732.5 262.7 L735.1 261.7 L737.5 260.5 L739.8 259.2 L742.1 257.8 L744.2 256.2 L746.2 254.5 L748.1 252.6 L749.8 250.6 L751.4 248.5 L752.9 246.3 L754.2 244.0 L755.4 241.5 L730.7 235.0 L732.5 238.9Z" fill="#8d5008" stroke="#0a0a0a" stroke-width="0.8"/>
<path d="M721.9 273.4 L732.5 262.7 L732.5 238.9 L721.9 249.6Z" fill="#343434" stroke="#0a0a0a" stroke-width="0.8"/>
</g>
<path d="M732.7 267.6 L734.8 265.8 L736.9 263.8 L738.8 261.8 L740.5 259.6 L742.1 257.2 L743.5 254.8 L744.7 252.2 L755.4 241.5 L754.1 244.1 L752.7 246.6 L751.1 248.9 L749.4 251.1 L747.5 253.2 L745.5 255.1 L743.3 256.9Z" fill="none" stroke="#0a0a0a" stroke-width="1"/>
<path d="M695.2 286.4 L695.2 284.5 L695.1 282.5 L694.9 280.4 L694.7 278.4 L694.3 276.4 L694.0 274.3 L693.5 272.3 L693.0 270.2 L692.4 268.2 L691.7 266.1 L691.0 264.1 L690.2 262.1 L689.3 260.1 L688.4 258.1 L687.4 256.1 L686.3 254.1 L685.2 252.1 L684.0 250.2 L682.8 248.3 L681.5 246.4 L680.2 244.6 L678.8 242.8 L677.3 241.0 L675.8 239.3 L674.3 237.5 L672.7 235.9 L671.0 234.3 L669.3 232.7 L667.6 231.2 L665.9 229.7 L664.1 228.3 L662.2 226.9 L660.4 225.5 L658.5 224.3 L656.6 223.1 L654.7 221.9 L652.7 220.8 L650.7 219.8 L648.7 218.8 L646.7 217.9 L644.7 217.1 L642.6 216.3 L640.6 215.6 L638.5 214.9 L636.5 214.4 L634.5 213.9 L632.4 213.4 L630.4 213.1 L628.3 212.8 L626.3 212.6 L624.3 212.4 L622.3 212.3 L620.3 212.3 L618.3 212.4 L616.4 212.5 L614.5 212.7 L612.6 213.0 L610.8 213.3 L608.9 213.7 L607.1 214.2 L605.4 214.8 L603.7 215.4 L602.0 216.1 L600.3 216.9 L598.7 217.7 L597.2 218.6 L595.7 219.5 L594.2 220.6 L592.8 221.6 L591.5 222.8 L590.2 224.0 L589.0 225.2 L587.8 226.5 L586.7 227.9 L585.6 229.3 L584.6 230.8 L583.7 232.3 L582.8 233.9 L582.0 235.5 L581.3 237.1 L580.6 238.8 L580.0 240.5 L579.5 242.3 L579.0 244.1 L578.7 246.0 L578.3 247.8 L578.1 249.7 L577.9 251.6 L577.8 253.6 L577.8 255.6 L577.8 257.5 L577.9 259.5 L578.1 261.6 L578.3 263.6 L578.7 265.6 L579.0 267.7 L579.5 269.7 L580.0 271.8 L580.6 273.8 L581.3 275.9 L582.0 277.9 L582.8 279.9 L583.7 281.9 L584.6 283.9 L585.6 285.9 L586.7 287.9 L587.8 289.9 L589.0 291.8 L590.2 293.7 L591.5 295.6 L592.8 297.4 L594.2 299.2 L595.7 301.0 L597.2 302.7 L598.7 304.5 L600.3 306.1 L602.0 307.7 L603.7 309.3 L605.4 310.8 L607.1 312.3 L608.9 313.7 L610.8 315.1 L612.6 316.5 L614.5 317.7 L616.4 318.9 L618.3 320.1 L620.3 321.2 L622.3 322.2 L624.3 323.2 L626.3 324.1 L628.3 324.9 L630.4 325.7 L632.4 326.4 L634.5 327.1 L636.5 327.6 L638.5 328.1 L640.6 328.6 L642.6 328.9 L644.7 329.2 L646.7 329.4 L648.7 329.6 L650.7 329.7 L652.7 329.7 L654.7 329.6 L656.6 329.5 L658.5 329.3 L660.4 329.0 L662.2 328.7 L664.1 328.3 L665.9 327.8 L667.6 327.2 L669.3 326.6 L671.0 325.9 L672.7 325.1 L674.3 324.3 L675.8 323.4 L677.3 322.5 L678.8 321.4 L680.2 320.4 L681.5 319.2 L682.8 318.0 L684.0 316.8 L685.2 315.5 L686.3 314.1 L687.4 312.7 L688.4 311.2 L689.3 309.7 L690.2 308.1 L691.0 306.5 L691.7 304.9 L692.4 303.2 L693.0 301.5 L693.5 299.7 L694.0 297.9 L694.3 296.0 L694.7 294.2 L694.9 292.3 L695.1 290.4 L695.2 288.4 L695.2 286.4Z" fill="#5e3506" stroke="#0a0a0a" stroke-width="1.3"/>
<clipPath id="hc"><path d="M652.1 275.1 L652.1 274.0 L652.0 273.0 L651.8 271.9 L651.5 270.8 L651.2 269.7 L650.8 268.6 L650.3 267.6 L649.8 266.5 L649.1 265.5 L648.5 264.5 L647.7 263.5 L647.0 262.6 L646.1 261.7 L645.2 260.8 L644.3 260.0 L643.3 259.3 L642.4 258.6 L641.3 257.9 L640.3 257.4 L639.2 256.9 L638.1 256.4 L637.0 256.1 L636.0 255.8 L634.9 255.6 L633.8 255.5 L632.7 255.4 L631.7 255.4 L630.6 255.5 L629.7 255.7 L628.7 255.9 L627.8 256.2 L626.9 256.6 L626.0 257.1 L625.3 257.6 L624.5 258.2 L623.9 258.8 L623.2 259.5 L622.7 260.3 L622.2 261.1 L621.8 262.0 L621.5 262.9 L621.2 263.8 L621.0 264.8 L620.9 265.9 L620.9 266.9 L620.9 268.0 L621.0 269.0 L621.2 270.1 L621.5 271.2 L621.8 272.3 L622.2 273.4 L622.7 274.4 L623.2 275.5 L623.9 276.5 L624.5 277.5 L625.3 278.5 L626.0 279.4 L626.9 280.3 L627.8 281.2 L628.7 282.0 L629.7 282.7 L630.6 283.4 L631.7 284.1 L632.7 284.6 L633.8 285.1 L634.9 285.6 L636.0 285.9 L637.0 286.2 L638.1 286.4 L639.2 286.5 L640.3 286.6 L641.3 286.6 L642.4 286.5 L643.3 286.3 L644.3 286.1 L645.2 285.8 L646.1 285.4 L647.0 284.9 L647.7 284.4 L648.5 283.8 L649.1 283.2 L649.8 282.5 L650.3 281.7 L650.8 280.9 L651.2 280.0 L651.5 279.1 L651.8 278.2 L652.0 277.2 L652.1 276.1 L652.1 275.1Z"/></clipPath>
<path d="M652.1 275.1 L652.1 274.0 L652.0 273.0 L651.8 271.9 L651.5 270.8 L651.2 269.7 L650.8 268.6 L650.3 267.6 L649.8 266.5 L649.1 265.5 L648.5 264.5 L647.7 263.5 L647.0 262.6 L646.1 261.7 L645.2 260.8 L644.3 260.0 L643.3 259.3 L642.4 258.6 L641.3 257.9 L640.3 257.4 L639.2 256.9 L638.1 256.4 L637.0 256.1 L636.0 255.8 L634.9 255.6 L633.8 255.5 L632.7 255.4 L631.7 255.4 L630.6 255.5 L629.7 255.7 L628.7 255.9 L627.8 256.2 L626.9 256.6 L626.0 257.1 L625.3 257.6 L624.5 258.2 L623.9 258.8 L623.2 259.5 L622.7 260.3 L622.2 261.1 L621.8 262.0 L621.5 262.9 L621.2 263.8 L621.0 264.8 L620.9 265.9 L620.9 266.9 L620.9 268.0 L621.0 269.0 L621.2 270.1 L621.5 271.2 L621.8 272.3 L622.2 273.4 L622.7 274.4 L623.2 275.5 L623.9 276.5 L624.5 277.5 L625.3 278.5 L626.0 279.4 L626.9 280.3 L627.8 281.2 L628.7 282.0 L629.7 282.7 L630.6 283.4 L631.7 284.1 L632.7 284.6 L633.8 285.1 L634.9 285.6 L636.0 285.9 L637.0 286.2 L638.1 286.4 L639.2 286.5 L640.3 286.6 L641.3 286.6 L642.4 286.5 L643.3 286.3 L644.3 286.1 L645.2 285.8 L646.1 285.4 L647.0 284.9 L647.7 284.4 L648.5 283.8 L649.1 283.2 L649.8 282.5 L650.3 281.7 L650.8 280.9 L651.2 280.0 L651.5 279.1 L651.8 278.2 L652.0 277.2 L652.1 276.1 L652.1 275.1Z" fill="url(#ihole)" stroke="#0a0a0a" stroke-width="1.1"/>
<g clip-path="url(#hc)"><path d="M648.9 278.3 L648.9 277.2 L648.8 276.2 L648.6 275.1 L648.3 274.0 L648.0 272.9 L647.6 271.8 L647.1 270.8 L646.6 269.7 L645.9 268.7 L645.3 267.7 L644.5 266.7 L643.8 265.8 L642.9 264.9 L642.0 264.0 L641.1 263.2 L640.2 262.5 L639.2 261.8 L638.1 261.1 L637.1 260.6 L636.0 260.1 L634.9 259.6 L633.9 259.3 L632.8 259.0 L631.7 258.8 L630.6 258.7 L629.5 258.6 L628.5 258.6 L627.5 258.7 L626.5 258.9 L625.5 259.1 L624.6 259.4 L623.7 259.8 L622.9 260.3 L622.1 260.8 L621.3 261.4 L620.7 262.0 L620.1 262.7 L619.5 263.5 L619.0 264.3 L618.6 265.2 L618.3 266.1 L618.0 267.0 L617.8 268.0 L617.7 269.1 L617.7 270.1 L617.7 271.2 L617.8 272.2 L618.0 273.3 L618.3 274.4 L618.6 275.5 L619.0 276.6 L619.5 277.6 L620.1 278.7 L620.7 279.7 L621.3 280.7 L622.1 281.7 L622.9 282.6 L623.7 283.5 L624.6 284.4 L625.5 285.2 L626.5 285.9 L627.5 286.6 L628.5 287.3 L629.5 287.8 L630.6 288.3 L631.7 288.8 L632.8 289.1 L633.9 289.4 L634.9 289.6 L636.0 289.7 L637.1 289.8 L638.1 289.8 L639.2 289.7 L640.2 289.5 L641.1 289.3 L642.0 289.0 L642.9 288.6 L643.8 288.1 L644.5 287.6 L645.3 287.0 L645.9 286.4 L646.6 285.7 L647.1 284.9 L647.6 284.1 L648.0 283.2 L648.3 282.3 L648.6 281.3 L648.8 280.4 L648.9 279.3 L648.9 278.3Z" fill="none" stroke="#0a0a0a" stroke-width="0.9"/><path d="M647.8 279.4 L647.8 278.4 L647.6 277.3 L647.5 276.2 L647.2 275.1 L646.9 274.0 L646.4 273.0 L646.0 271.9 L645.4 270.8 L644.8 269.8 L644.1 268.8 L643.4 267.8 L642.6 266.9 L641.8 266.0 L640.9 265.2 L640.0 264.4 L639.0 263.6 L638.0 262.9 L637.0 262.3 L635.9 261.7 L634.9 261.2 L633.8 260.8 L632.7 260.4 L631.6 260.1 L630.5 259.9 L629.5 259.8 L628.4 259.7 L627.3 259.7 L626.3 259.8 L625.3 260.0 L624.4 260.2 L623.4 260.6 L622.5 260.9 L621.7 261.4 L620.9 261.9 L620.2 262.5 L619.5 263.2 L618.9 263.9 L618.4 264.6 L617.9 265.5 L617.5 266.3 L617.1 267.2 L616.9 268.2 L616.7 269.2 L616.6 270.2 L616.5 271.2 L616.6 272.3 L616.7 273.4 L616.9 274.5 L617.1 275.5 L617.5 276.6 L617.9 277.7 L618.4 278.8 L618.9 279.8 L619.5 280.9 L620.2 281.9 L620.9 282.9 L621.7 283.8 L622.5 284.7 L623.4 285.5 L624.4 286.3 L625.3 287.1 L626.3 287.8 L627.3 288.4 L628.4 289.0 L629.5 289.5 L630.5 289.9 L631.6 290.3 L632.7 290.5 L633.8 290.8 L634.9 290.9 L635.9 291.0 L637.0 290.9 L638.0 290.8 L639.0 290.7 L640.0 290.4 L640.9 290.1 L641.8 289.7 L642.6 289.3 L643.4 288.8 L644.1 288.2 L644.8 287.5 L645.4 286.8 L646.0 286.0 L646.4 285.2 L646.9 284.4 L647.2 283.4 L647.5 282.5 L647.6 281.5 L647.8 280.5 L647.8 279.4Z" fill="none" stroke="#0a0a0a" stroke-width="0.8"/></g>
<path d="M621.0 265.3 L577.8 254.2 L577.8 256.9 L621.0 268.5Z" fill="#9a6418" stroke="#0a0a0a" stroke-width="0.8"/>
</g>
<path d="M721.6 128.3 L721.2 128.7 L720.7 129.2 L720.3 129.6 L719.9 130.1 L719.4 130.5 L719.0 130.9 L718.5 131.4 L718.1 131.8 L717.7 132.3 L717.2 132.7 L716.8 133.1 L716.3 133.6 L715.9 134.0 L715.5 134.5 L715.0 134.9 L714.6 135.4 L714.1 135.8 L713.7 136.2 L713.3 136.7 L712.8 137.1 L712.4 137.6 L711.9 138.0 L711.5 138.4 L711.1 138.9 L710.6 139.3 L710.2 139.8 L709.7 140.2 L709.3 140.6 L708.9 141.1 L708.4 141.5 M723.7 128.9 L723.3 129.3 L722.9 129.7 L722.4 130.1 L722.0 130.5 L721.6 130.9 L721.2 131.3 L720.8 131.7 L720.4 132.1 L720.0 132.5 L719.6 132.9 L719.2 133.3 L718.8 133.7 L718.4 134.1 L718.0 134.5 L717.6 135.0 L717.2 135.4 L716.8 135.8 L716.4 136.2 L716.0 136.6 L715.5 137.0 L715.1 137.4 L714.7 137.8 L714.3 138.2 L713.9 138.6 L713.5 139.0 L713.1 139.4 L712.7 139.8 L712.3 140.2 L711.9 140.6 L711.5 141.1" fill="none" stroke="#1a1208" stroke-width="0.8"/>
<path d="M708.2 141.8 L711.4 142.7 L714.7 143.8 L718.0 145.1 L721.2 146.5 L724.4 148.1 L727.5 149.8 L730.6 151.7 L733.6 153.8 L736.5 155.9 L739.4 158.3 L742.1 160.7 L744.7 163.3 L747.3 165.9 L749.7 168.7 L752.0 171.6 L754.1 174.5 L756.1 177.6 L758.0 180.6 L759.7 183.8 L761.3 187.0 L762.7 190.2 L763.9 193.5 L764.9 196.7 L765.8 200.0 L766.5 203.3 L767.0 206.5 L767.3 209.8 L767.5 213.0 L767.5 216.1 L767.3 219.2 L766.9 222.2 L766.3 225.2 L765.5 228.1 L764.6 230.9 L763.5 233.5 L762.2 236.1 L760.8 238.6 L759.2 240.9 L757.4 243.1 L755.5 245.2" fill="none" stroke="#120c04" stroke-width="1.3"/>
<path d="M711.5 141.1 L714.7 142.1 L717.9 143.2 L721.1 144.6 L724.3 146.1 L727.4 147.7 L730.4 149.5 L733.4 151.5 L736.3 153.6 L739.2 155.8 L741.9 158.1 L744.6 160.6 L747.2 163.1 L749.6 165.8 L751.9 168.6 L754.1 171.4 L756.2 174.4 L758.1 177.4 L759.9 180.4 L761.5 183.5 L763.0 186.7 L764.3 189.9 L765.5 193.1 L766.5 196.3 L767.3 199.5 L767.9 202.7 L768.4 205.9 L768.7 209.1 L768.8 212.3 L768.7 215.4 L768.5 218.4 L768.1 221.4 L767.5 224.3 L766.7 227.1 L765.8 229.8 L764.7 232.5 L763.4 235.0 L762.0 237.4 L760.4 239.7 L758.7 241.9 L756.8 243.9" fill="none" stroke="#120c04" stroke-width="1.2" stroke-dasharray="6 0.8"/>
<path d="M707.6 272.0 L707.7 274.4 L707.6 276.8 L707.4 279.2 L707.1 281.6 L706.7 283.8 L706.2 286.1 L705.6 288.3 L704.9 290.4 L704.1 292.5 L703.2 294.5 L702.2 296.5 L701.0 298.4 L699.8 300.2 L698.5 301.9 L697.1 303.6 L695.7 305.1 M708.7 270.9 L708.8 273.3 L708.7 275.7 L708.5 278.1 L708.2 280.4 L707.8 282.7 L707.3 285.0 L706.7 287.2 L706.0 289.3 L705.2 291.4 L704.3 293.4 L703.3 295.4 L702.2 297.3 L701.0 299.1 L699.6 300.8 L698.3 302.5 L696.8 304.0" fill="none" stroke="#1a1208" stroke-width="0.8"/>
<path d="M752.2 157.2 L752.9 156.7 L753.9 156.5 L755.0 156.6 L756.1 157.0 L757.2 157.7 L758.2 158.7 L759.0 159.8 L759.5 161.0 L759.8 162.3 L759.8 163.4 L759.6 164.4 L759.1 165.2 L758.3 165.7 L757.4 165.8 L756.4 165.7 L755.4 165.2 L754.3 164.4 L753.4 163.5 L752.5 162.4 L751.9 161.2 L751.6 160.0 L751.5 158.9 L751.7 157.9Z" fill="#3a2206" stroke="#1a1208" stroke-width="0.8" stroke-dasharray="1.4 0.9"/>
<path d="M753.8 158.8 L754.2 158.6 L754.7 158.4 L755.3 158.5 L756.0 158.8 L756.6 159.2 L757.1 159.7 L757.6 160.3 L757.9 161.0 L758.1 161.7 L758.1 162.4 L757.9 162.9 L757.7 163.4 L757.2 163.7 L756.7 163.8 L756.1 163.7 L755.5 163.4 L754.9 163.0 L754.4 162.5 L753.9 161.8 L753.6 161.1 L753.4 160.5 L753.4 159.8 L753.5 159.3Z" fill="none" stroke="#1a1208" stroke-width="0.8" stroke-dasharray="1.1 0.8"/>
<clipPath id="bodyc"><path d="M769.0 231.7 L770.8 229.8 L772.4 227.7 L773.9 225.5 L775.3 223.2 L776.6 220.9 L777.7 218.4 L778.6 215.8 L779.4 213.1 L780.0 210.4 L780.5 207.6 L780.8 204.7 L781.0 201.8 L780.9 198.8 L780.8 195.8 L780.4 192.8 L779.9 189.7 L779.3 186.7 L778.5 183.6 L777.5 180.5 L776.4 177.5 L775.2 174.4 L773.8 171.4 L772.2 168.5 L770.5 165.5 L768.7 162.7 L766.8 159.9 L764.7 157.1 L762.5 154.5 L760.2 151.9 L757.8 149.4 L755.3 147.0 L752.7 144.7 L750.1 142.5 L747.3 140.5 L744.5 138.6 L741.6 136.7 L738.7 135.1 L735.7 133.5 L732.7 132.1 L729.7 130.9 L726.6 129.8 L723.6 128.8 L720.5 128.0 L717.4 127.4 L714.4 126.9 L711.3 126.6 L708.3 126.4 L705.3 126.4 L702.4 126.6 L699.6 126.9 L696.8 127.4 L694.0 128.0 L691.4 128.8 L688.8 129.7 L686.3 130.8 L683.9 132.1 L681.6 133.5 L679.5 135.0 L677.4 136.7 L675.5 138.5 L589.8 224.4 L588.0 226.3 L586.3 228.4 L584.8 230.6 L583.4 232.8 L582.2 235.2 L581.1 237.7 L580.1 240.3 L579.3 242.9 L578.7 245.7 L578.2 248.5 L577.9 251.4 L577.8 254.3 L577.8 257.2 L578.0 260.2 L578.3 263.3 L578.8 266.3 L579.4 269.4 L580.2 272.5 L581.2 275.5 L582.3 278.6 L583.6 281.6 L585.0 284.6 L586.5 287.6 L588.2 290.5 L590.0 293.4 L592.0 296.2 L594.0 299.0 L596.2 301.6 L598.5 304.2 L600.9 306.7 L603.4 309.1 L606.0 311.4 L608.7 313.5 L611.4 315.6 L614.2 317.5 L617.1 319.3 L620.0 321.0 L623.0 322.6 L626.0 324.0 L629.0 325.2 L632.1 326.3 L635.2 327.3 L638.2 328.1 L641.3 328.7 L644.4 329.2 L647.4 329.5 L650.4 329.7 L653.4 329.7 L656.3 329.5 L659.2 329.2 L662.0 328.7 L664.7 328.1 L667.4 327.3 L669.9 326.3 L672.4 325.2 L674.8 324.0 L677.1 322.6 L679.2 321.1 L681.3 319.4 L683.2 317.6Z"/></clipPath>
<g clip-path="url(#bodyc)"><path d="M670.1 144.0 L671.3 142.8 L672.8 141.3 L674.4 139.8 L676.2 138.3 L677.9 136.9 L679.5 135.8 L680.9 135.0 L681.9 134.6 L682.6 134.6 L682.8 135.0 L682.4 135.7 L681.6 136.6 L680.3 137.8 L678.7 139.0 L676.9 140.3 L675.0 141.6 L673.1 142.8 L671.5 143.9 L670.1 144.7 L669.2 145.3 L668.7 145.5 L668.7 145.4 L669.2 144.9Z" fill="#7d4706" stroke="#1a1208" stroke-width="0.9"/>
<path d="M596.1 218.0 L597.2 216.9 L598.6 215.6 L600.1 214.1 L601.6 212.7 L603.2 211.4 L604.6 210.3 L605.8 209.5 L606.7 209.0 L607.3 208.9 L607.4 209.2 L607.0 209.8 L606.3 210.7 L605.1 211.8 L603.7 213.0 L602.0 214.2 L600.3 215.5 L598.6 216.7 L597.1 217.7 L596.0 218.6 L595.2 219.2 L594.8 219.4 L594.9 219.3 L595.3 218.9Z" fill="#c9c6c0" stroke="#1a1208" stroke-width="1"/></g>
<text transform="matrix(-0.625 -0.374 0.339 -0.340 671.6 206.8)" text-anchor="middle" font-family="Liberation Sans,sans-serif" font-style="italic" font-size="24.5" fill="#1a2890" stroke="#121a60" stroke-width="1.2">C</text>
<text transform="matrix(-0.655 -0.268 0.339 -0.340 661.1 201.5)" text-anchor="middle" font-family="Liberation Sans,sans-serif" font-style="italic" font-size="24.5" fill="#1a2890" stroke="#121a60" stroke-width="1.2">e</text>
<text transform="matrix(-0.662 -0.165 0.339 -0.340 651.5 198.4)" text-anchor="middle" font-family="Liberation Sans,sans-serif" font-style="italic" font-size="24.5" fill="#1a2890" stroke="#121a60" stroke-width="1.2">d</text>
<text transform="matrix(-0.651 -0.055 0.339 -0.340 641.6 196.7)" text-anchor="middle" font-family="Liberation Sans,sans-serif" font-style="italic" font-size="24.5" fill="#1a2890" stroke="#121a60" stroke-width="1.2">o</text>
<text transform="matrix(-0.618 0.066 0.339 -0.340 631.2 196.8)" text-anchor="middle" font-family="Liberation Sans,sans-serif" font-style="italic" font-size="24.5" fill="#1a2890" stroke="#121a60" stroke-width="1.2">n</text>
<text transform="matrix(-0.553 0.205 0.339 -0.340 620.0 199.4)" text-anchor="middle" font-family="Liberation Sans,sans-serif" font-style="italic" font-size="24.5" fill="#1a2890" stroke="#121a60" stroke-width="1.2">g</text>
<!-- triad -->
<g>
<path d="M554.1 342.2 L543.500 352.400" stroke="#1a1ab0" stroke-width="4.200" fill="none"/>
<path d="M546 346.500 l-5.500 2.500 l0.500 6.500 l6 -0.500 l2.500 -5z" fill="#1414b8"/>
<path d="M554.1 342.2 L573 347.200" stroke="#c01414" stroke-width="3.800" fill="none"/><path d="M555 341.500 L573 346.300" stroke="#f08080" stroke-width="1" fill="none"/>
<path d="M572.300 342.300 L581.500 349.500 L570 352.300Z" fill="#e02828"/>
<rect x="552.100" y="324" width="4" height="19.500" fill="#146a1c"/><rect x="553.400" y="324" width="1.300" height="19" fill="#70c880"/>
<path d="M549.300 326.500 L554.1 316.500 L558.900 326.500Z" fill="#1c8a2a"/>
<text transform="translate(550.800 315) scale(0.720 1)" font-family="Liberation Serif,serif" font-weight="bold" font-size="11" fill="#108a20">Y</text>
<text transform="translate(580.500 355) scale(0.720 1)" font-family="Liberation Serif,serif" font-weight="bold" font-size="11" fill="#f01010">X</text>
<text transform="translate(535.500 363) scale(0.800 1)" font-family="Liberation Serif,serif" font-weight="bold" font-size="11" fill="#1010f0">Z</text>
</g>
</svg>
</div>
<div id="vp3" class="abs vp"><svg class="abs" style="left:0;top:0" width="326" height="318" viewBox="185 405 326 318">
<defs>
<linearGradient id="bg3" x1="0" y1="0" x2="0" y2="1">
<stop offset="0" stop-color="#ffffff"/><stop offset="0.08" stop-color="#fbfbfe"/><stop offset="0.30" stop-color="#e9ebf5"/><stop offset="0.50" stop-color="#e1e4f0"/><stop offset="0.62" stop-color="#e4e6f1"/><stop offset="0.80" stop-color="#f6f7fb"/><stop offset="0.92" stop-color="#ffffff"/>
</linearGradient>
</defs>
<circle cx="345.600" cy="623.300" r="88.600" fill="#5e3506" stroke="#0a0603" stroke-width="1.700"/>
<rect x="257.5" y="623" width="66" height="3.4" fill="#6a3d08"/>
<path d="M257.5 623H324 M257.5 626.4H324" stroke="#0a0603" stroke-width="0.9"/>
<rect x="276" y="624" width="13" height="1.4" fill="#2a2a2a"/>
<circle cx="345.8" cy="623.2" r="23.6" fill="#242424" stroke="#050505" stroke-width="1.2"/>
<g>
<rect x="222.400" y="662" width="4" height="22" fill="#168a24"/><rect x="223.700" y="662" width="1.300" height="22" fill="#80d890"/>
<path d="M219.900 667 L224.400 656.500 L228.900 667Z" fill="#0c6a18"/>
<rect x="227" y="684.700" width="20" height="4" fill="#d01414"/><rect x="227" y="686" width="20" height="1.300" fill="#f08080"/>
<path d="M245.500 682.200 L255.500 686.700 L245.500 691.200Z" fill="#d81818"/>
<circle cx="224.400" cy="686.700" r="4.600" fill="#1414a8"/>
<text transform="translate(221.400 654.500) scale(0.720 1)" font-family="Liberation Serif,serif" font-weight="bold" font-size="11" fill="#108a20">Y</text>
<text transform="translate(256 691.700) scale(0.720 1)" font-family="Liberation Serif,serif" font-weight="bold" font-size="11" fill="#f01010">X</text>
</g>
</svg>
</div>
<div id="vp4" class="abs vp"><svg class="abs" style="left:0;top:0" width="330" height="318" viewBox="515 405 330 318">
<defs>
<linearGradient id="bg4" x1="0" y1="0" x2="0" y2="1">
<stop offset="0" stop-color="#ffffff"/><stop offset="0.08" stop-color="#fbfbfe"/><stop offset="0.30" stop-color="#e9ebf5"/><stop offset="0.50" stop-color="#e1e4f0"/><stop offset="0.62" stop-color="#e4e6f1"/><stop offset="0.80" stop-color="#f6f7fb"/><stop offset="0.92" stop-color="#ffffff"/>
</linearGradient>
<linearGradient id="or4" x1="0" y1="534" x2="0" y2="712" gradientUnits="userSpaceOnUse">
<stop offset="0" stop-color="#a25a0b"/><stop offset="0.12" stop-color="#a55c0c"/><stop offset="0.29" stop-color="#b6741d"/><stop offset="0.48" stop-color="#a9610f"/><stop offset="0.8" stop-color="#91500a"/><stop offset="1" stop-color="#8a4a07"/>
</linearGradient>
<linearGradient id="gr4" x1="0" y1="534" x2="0" y2="712" gradientUnits="userSpaceOnUse">
<stop offset="0" stop-color="#3a3a3a"/><stop offset="0.14" stop-color="#404040"/><stop offset="0.28" stop-color="#565656"/><stop offset="0.45" stop-color="#444"/><stop offset="1" stop-color="#343434"/>
</linearGradient>
</defs>
<g transform="translate(0 0.700)">
<rect x="592.5" y="534" width="260" height="177.5" fill="url(#or4)" stroke="#1a1208" stroke-width="1.400"/>
<path d="M656 534.5 H735 V542 H782 V706 H735 V711 H656 V655.5 H703.5 V592 H656 Z" fill="url(#gr4)" stroke="#0c0c0c" stroke-width="1.6"/>
<g fill="#363636" stroke="#0c0c0c" stroke-width="1.5">
<rect x="656" y="541" width="32" height="34.5"/>
<rect x="656" y="670" width="32" height="36"/>
<rect x="750" y="548" width="32" height="43"/>
<rect x="750" y="654.5" width="32" height="43.5"/>
</g>
<path d="M806.5 534V711 M809 534V711" stroke="#1a1208" stroke-width="1" fill="none"/>
<rect x="629.3" y="621" width="3" height="91" fill="#f6f6fa" stroke="#2a1a08" stroke-width="0.7"/>
<circle cx="826.3" cy="559.6" r="7.2" fill="#cfcdc9" stroke="#2a2118" stroke-width="2.2"/>
<path d="M620 536 q4 8 10 5 q6-4 -2-5 q8 -2 9 3 q0 5 -6 4" stroke="#0c1040" stroke-width="1.6" fill="none"/>
</g>
<g>
<rect x="552" y="662" width="4" height="22" fill="#168a24"/><rect x="553.300" y="662" width="1.300" height="22" fill="#80d890"/>
<path d="M549.500 667 L554 656.500 L558.500 667Z" fill="#0c6a18"/>
<rect x="531" y="684.700" width="20" height="4" fill="#2020d0"/><rect x="531" y="686" width="20" height="1.300" fill="#8a8af0"/>
<path d="M533.500 682.200 L523.500 686.700 L533.500 691.200Z" fill="#1818c0"/>
<circle cx="554" cy="686.700" r="4.600" fill="#c01414"/>
<text transform="translate(551 654.500) scale(0.720 1)" font-family="Liberation Serif,serif" font-weight="bold" font-size="11" fill="#108a20">Y</text>
<text transform="translate(517 691.700) scale(0.800 1)" font-family="Liberation Serif,serif" font-weight="bold" font-size="11" fill="#1010f0">Z</text>
</g>
</svg>
</div>
<div class="abs" style="left:511px;top:58px;width:1px;height:665px;background:#5d6290"></div>
<div class="abs" style="left:512px;top:58px;width:2px;height:665px;background:#fdfdff"></div>
<div class="abs" style="left:514px;top:58px;width:1px;height:665px;background:#3b3e58"></div>
<div class="abs" style="left:185px;top:401px;width:660px;height:1px;background:#5d6290"></div>
<div class="abs" style="left:185px;top:402px;width:660px;height:2px;background:#fdfdff"></div>
<div class="abs" style="left:185px;top:404px;width:660px;height:1px;background:#3b3e58"></div>
<!-- view labels -->
<div class="vlabel" style="left:216.5px;top:383.300px"><span class="ast">*</span>上视</div>
<div class="vlabel" style="left:530.5px;top:383.300px"><span class="ast">*</span>上下二等角轴测</div>
<!-- link icon -->
<svg class="abs" style="left:195px;top:385px" width="20" height="12" viewBox="0 0 20 12">
<rect x="1" y="2" width="15.500" height="7.500" rx="3.750" fill="#f6f6f4" stroke="#7d766c" stroke-width="1.300"/>
<path d="M5.500 4.300h-0.500a1.500 1.500 0 0 0 0 3h2.500a1.500 1.500 0 0 0 1.400-2 M12 7.300h0.500a1.500 1.500 0 0 0 0-3h-2.500a1.500 1.500 0 0 0-1.400 2" fill="none" stroke="#7d766c" stroke-width="1"/>
</svg>
<!-- collapse handle -->
<svg class="abs" style="left:178px;top:386px" width="16" height="32" viewBox="178 386 16 32">
<path d="M179 388.500h10.500a2.500 2.500 0 0 1 2.500 2.500v21a2.500 2.500 0 0 1-2.500 2.500h-7v-3h-3.500z" fill="#e1e4ee"/>
<path d="M183 388.500h6.500a2.500 2.500 0 0 1 2.500 2.500v21a2.500 2.500 0 0 1-2.500 2.500h-6" fill="none" stroke="#9a9db8" stroke-width="1"/>
<path d="M192.200 391.500v20.500a2.500 2.500 0 0 1-2.500 2.800h-5.500" fill="none" stroke="#4d5070" stroke-width="1.300"/>
<path d="M190.200 390.500v5l-3.200-2.500z M190.200 398.500v5l-3.200-2.500z M190.200 406.500v5l-3.200-2.500z" fill="#5a58a8"/>
</svg>
<div class="abs" style="left:843px;top:58px;width:2px;height:665px;background:#eff0f7"></div>
<div class="abs" style="left:842.500px;top:58px;width:0.800px;height:665px;background:#d9dbe8"></div>
<div class="abs" style="left:843px;top:418px;width:1.500px;height:4px;background:#333"></div>

<svg class="abs" style="left:185px;top:58px" width="660" height="345" viewBox="185 58 660 345">
<defs>
<radialGradient id="ballhl" cx="0.35" cy="0.3" r="0.7"><stop offset="0" stop-color="#fff" stop-opacity="0.75"/><stop offset="0.5" stop-color="#fff" stop-opacity="0.1"/><stop offset="1" stop-color="#000" stop-opacity="0.15"/></radialGradient>
<linearGradient id="dcube" x1="0" y1="0" x2="1" y2="0"><stop offset="0" stop-color="#fdfdff"/><stop offset="0.45" stop-color="#e8eefa"/><stop offset="0.55" stop-color="#6a9ae8"/><stop offset="1" stop-color="#3a74d8"/></linearGradient>
</defs>
<g transform="translate(209 63)"><path d="M10 10l5 5" stroke="#3a7ae0" stroke-width="2.600" stroke-linecap="round"/><path d="M10.500 10.500l4 4" stroke="#a8d0ff" stroke-width="1" stroke-linecap="round"/>
<circle cx="6.200" cy="6.200" r="5.300" fill="#dcdee6" stroke="#8a8a92" stroke-width="1.200"/>
<rect x="4.200" y="4.200" width="4" height="4" fill="#eef0f6"/><path d="M3.200 4.600v3.200 M9.200 4.600v3.200 M4.600 3.200h3.200 M4.600 9.200h3.200" stroke="#333" stroke-width="1.300"/></g>
<g transform="translate(232 63)"><path d="M10 10l5 5" stroke="#3a7ae0" stroke-width="2.600" stroke-linecap="round"/><path d="M10.500 10.500l4 4" stroke="#a8d0ff" stroke-width="1" stroke-linecap="round"/>
<circle cx="6.400" cy="6.400" r="5.300" fill="#dcdee6" stroke="#8a8a92" stroke-width="1.200"/>
<rect x="0.600" y="0.600" width="9.500" height="8" fill="none" stroke="#555" stroke-width="0.900" stroke-dasharray="1.600 1.200"/></g>
<g transform="translate(255 63)"><path d="M2 1.500l2.500-1.500l9 9.500l-3.500 3.500z" fill="#5aa0f0" stroke="#1a4ab0" stroke-width="0.900"/>
<ellipse cx="11.500" cy="11.500" rx="3.600" ry="2.600" transform="rotate(45 11.500 11.500)" fill="#d8ecff" stroke="#1a4ab0" stroke-width="0.900"/>
<path d="M5.500 3.500l-2 2 M8 6l-2.500 2.500" stroke="#1a4ab0" stroke-width="0.800"/>
<path d="M10 3h6 M10 3l2.500-2.500 M10 3l2.500 2.500" stroke="#2a6ae0" stroke-width="1.300" fill="none"/></g>
<g transform="translate(278.5 63)"><path d="M0.500 3.500a7 3 0 0 1 14 0v9.500a7 3 0 0 1-4 2.700v-9.700a3.200 1.600 0 0 0-6 0v9.700a7 3 0 0 1-4-2.700z" fill="#4a8ae8" stroke="#1a3a8a" stroke-width="0.900"/>
<path d="M0.500 3.500a7 3 0 0 1 14 0a7 3 0 0 1-4 2.600a3.200 1.600 0 0 0-6 0a7 3 0 0 1-4-2.600z" fill="#7ab4ff" stroke="#1a3a8a" stroke-width="0.700"/>
<rect x="0.800" y="5.500" width="3.600" height="9.800" fill="#f4d020" stroke="#8a7408" stroke-width="0.700"/><rect x="10.600" y="5.500" width="3.600" height="9.800" fill="#f4d020" stroke="#8a7408" stroke-width="0.700"/>
<path d="M1.500 7l2 1.500l-2 1.500l2 1.500l-2 1.500 M11.300 7l2 1.500l-2 1.500l2 1.500l-2 1.500" stroke="#8a7408" stroke-width="0.600" fill="none"/></g>
<g transform="translate(301 63)"><path d="M0.800 5l4.500-4.300h10.500v10.500l-4.500 4.500h-10.500z" fill="#fdfdff" stroke="#555" stroke-width="0.900"/>
<rect x="0.800" y="5" width="10.500" height="10.700" fill="url(#vo)" stroke="#2a4a9a" stroke-width="0.900"/>
<path d="M11.300 5l4.500-4.300" stroke="#555" stroke-width="0.900"/>
<path d="M8.500 1.500v3.500 M7 3.200h3 M13.500 6v3.500 M12 10.500h3 M12 10.500l1.200-1 M12 10.500l1.200 1" stroke="#e01818" stroke-width="1" fill="none"/></g>
<defs><linearGradient id="vo" x1="0" y1="0" x2="1" y2="1"><stop offset="0" stop-color="#9cc4ff"/><stop offset="1" stop-color="#3a7ae0"/></linearGradient></defs>
<path d="M320.5 71h5.400l-2.700 3.200z" fill="#4a4a78"/>
<g transform="translate(333.5 63)"><path d="M0.800 5l4.500-4.300h11v10.500l-4.500 4.500h-11z" fill="url(#dcube)" stroke="#555" stroke-width="0.900"/>
<path d="M0.800 5h11v10.700 M11.800 5l4.500-4.300" fill="none" stroke="#555" stroke-width="0.900"/><path d="M0.800 5l4.500-4.300h11l-4.500 4.300z" fill="#f4f7ff" opacity="0.700"/></g>
<path d="M353.7 71h5.400l-2.700 3.200z" fill="#4a4a78"/>
<g transform="translate(366 64)"><circle cx="4" cy="7.500" r="3.200" fill="#e4ecf8" stroke="#6a7a9a" stroke-width="1.200"/><circle cx="11.500" cy="10" r="3.200" fill="#cfe0f8" stroke="#6a7a9a" stroke-width="1.200"/>
<path d="M7 7.500c1-1 1.800-0.500 2 0.800 M1.500 5l3-4.500l1.500 0.500 M14 8l3-3.500l-1-0.800" stroke="#6a7a9a" stroke-width="1.100" fill="none"/></g>
<path d="M387 71h5.400l-2.700 3.200z" fill="#4a4a78"/>
<circle cx="407.7" cy="71" r="8" fill="#f0c020"/>
<path d="M407.7 71L407.7 63A8 8 0 0 1 415.7 71z" fill="#e83020"/>
<path d="M407.7 71L399.7 71A8 8 0 0 1 407.7 63z" fill="#3a78e8"/>
<path d="M407.7 71L407.7 79A8 8 0 0 1 399.7 71z" fill="#30b040"/>
<circle cx="407.7" cy="71" r="8" fill="url(#ballhl)"/>
<path d="M423 74.500h17v4.500h-17z" fill="#f4f4f4"/><path d="M423 74.500h2.800v2.200h-2.800z M428.600 74.500h2.800v2.200h-2.800z M434.200 74.500h2.800v2.200h-2.800z M425.800 76.700h2.800v2.300h-2.800z M431.400 76.700h2.800v2.300h-2.800z M437 76.700h3v2.300h-3z" fill="#222"/>
<circle cx="431.5" cy="69.5" r="6.3" fill="#f0c020"/>
<path d="M431.5 69.5L431.5 63.2A6.3 6.3 0 0 1 437.8 69.5z" fill="#e83020"/>
<path d="M431.5 69.5L425.2 69.5A6.3 6.3 0 0 1 431.5 63.2z" fill="#3a78e8"/>
<path d="M431.5 69.5L431.5 75.8A6.3 6.3 0 0 1 425.2 69.5z" fill="#30b040"/>
<circle cx="431.5" cy="69.5" r="6.3" fill="url(#ballhl)"/>
<path d="M443 71h5.400l-2.700 3.200z" fill="#4a4a78"/>
<g transform="translate(456 63)"><rect x="0.800" y="2.500" width="14" height="10" fill="#e8eaee" stroke="#555" stroke-width="1"/><rect x="2.500" y="4.200" width="10.600" height="6.600" fill="#c8ccd4"/>
<path d="M4 15.300h8 M6 13v2.300h4v-2.300" stroke="#777" stroke-width="1" fill="#aaa"/>
<path d="M5 6l4.500-5l5 0.500l2 2.500l-4 3l-3-2.500l-3 3z" fill="#e8b070" stroke="#8a5a2a" stroke-width="0.700"/></g>
<path d="M476 71h5.400l-2.700 3.200z" fill="#4a4a78"/>
<g fill="none" stroke="#8c8c90" stroke-width="1.300"><rect x="727.600" y="65.200" width="12" height="12.600"/><rect x="751" y="65.200" width="12" height="12.600"/></g>
<path d="M734.500 68.500l-3 3l3 3z M736.200 68v7h1.300v-7z M756.500 68.500l3 3l-3 3z M753.500 68v7h1.300v-7z" fill="#8c8c90"/>
<rect x="773.200" y="74.500" width="10.500" height="3.400" fill="#f4f4f8" stroke="#8c8c90" stroke-width="1.200"/>
<g fill="#f4f4f8" stroke="#8c8c90" stroke-width="1.200"><rect x="798" y="65.500" width="11.500" height="8.500"/><rect x="794" y="69.500" width="11.500" height="8.500"/></g><path d="M798 66.600h11.500 M794 70.600h11.500" stroke="#8c8c90" stroke-width="2"/>
<path d="M820 66l11.500 11.500 M831.500 66l-11.500 11.500" stroke="#8c8c90" stroke-width="3.200"/><path d="M820 66l11.500 11.500 M831.500 66l-11.500 11.500" stroke="#f0f0f4" stroke-width="1.200"/>
<rect x="821" y="118" width="30" height="143" fill="#c9cce0"/>
<path d="M846 117.5h-21.500a3.500 3.500 0 0 0-3.500 3.500v15.500a3.500 3.500 0 0 0 3.500 3.500h21.500z" fill="#f2f3f9" stroke="#8d90ad" stroke-width="1.100"/>
<path d="M846 141.5h-21.500a3.500 3.500 0 0 0-3.500 3.500v15.500a3.500 3.500 0 0 0 3.500 3.500h21.500z" fill="#c4c8de" stroke="#8d90ad" stroke-width="1.100"/>
<path d="M846 165.5h-21.500a3.500 3.500 0 0 0-3.500 3.500v15.500a3.500 3.500 0 0 0 3.500 3.500h21.500z" fill="#c4c8de" stroke="#8d90ad" stroke-width="1.100"/>
<path d="M846 189.5h-21.500a3.500 3.500 0 0 0-3.500 3.500v15.500a3.500 3.500 0 0 0 3.500 3.500h21.500z" fill="#c4c8de" stroke="#8d90ad" stroke-width="1.100"/>
<path d="M846 213.5h-21.500a3.500 3.500 0 0 0-3.500 3.500v15.500a3.500 3.500 0 0 0 3.500 3.500h21.500z" fill="#c4c8de" stroke="#8d90ad" stroke-width="1.100"/>
<path d="M846 237.5h-21.500a3.500 3.500 0 0 0-3.500 3.500v15.500a3.500 3.500 0 0 0 3.500 3.500h21.500z" fill="#c4c8de" stroke="#8d90ad" stroke-width="1.100"/>
<g transform="translate(825 120)"><path d="M8 1l-7.500 7.500h2.500v8h10.500v-8h2.500z" fill="#f8e8a0" stroke="#b07808" stroke-width="1.300"/><path d="M8 1l-7.500 7.500 M8 1l7.500 7.500" stroke="#c88a10" stroke-width="1.800"/><rect x="6.500" y="10" width="3.500" height="6.500" fill="#e8a818" stroke="#8a5a08" stroke-width="0.800"/><rect x="11.500" y="1.500" width="2.500" height="4" fill="#d03018"/></g>
<g transform="translate(825 144)"><rect x="0.800" y="7" width="4" height="10" fill="#20a838" stroke="#0a5a18" stroke-width="0.800"/><rect x="4.800" y="5" width="4" height="12" fill="#38c850" stroke="#0a5a18" stroke-width="0.800"/><rect x="8.800" y="2" width="4" height="15" fill="#f4d020" stroke="#8a6a08" stroke-width="0.800"/><rect x="12.800" y="3" width="3.800" height="14" fill="#3a78e8" stroke="#1a3a8a" stroke-width="0.800"/><path d="M9 2l2-1.500l2 1.500 M13 3l1.800-1.500l1.800 1.500" stroke="#555" stroke-width="0.800" fill="#eee"/></g>
<g transform="translate(825 169)"><path d="M0.800 3h5.500l1.500 2h8v10.500h-15z" fill="#f0b020" stroke="#a87408" stroke-width="0.900"/><path d="M0.800 15.500l3-8h13.500l-3 8z" fill="#ffe070" stroke="#c08a10" stroke-width="0.900"/></g>
<g transform="translate(825.5 192.5)"><rect x="0.600" y="0.600" width="14.500" height="11.500" fill="#f4f6fc" stroke="#2a4a9a" stroke-width="1"/><rect x="2.200" y="2.200" width="5" height="3" fill="#f4c020" stroke="#2a4a9a" stroke-width="0.600"/><rect x="8.500" y="2.200" width="5" height="3" fill="#dfe6f6" stroke="#2a4a9a" stroke-width="0.600"/><rect x="2.200" y="6.800" width="5" height="3.500" fill="#f4c020" stroke="#2a4a9a" stroke-width="0.600"/><rect x="8.500" y="6.800" width="5" height="3.500" fill="#dfe6f6" stroke="#2a4a9a" stroke-width="0.600"/><path d="M0 16.500h5.500" stroke="#1a3ae0" stroke-width="1.800"/><path d="M4.500 13.500l3.500 3l-3.500 3z" fill="#1a3ae0"/></g>
<circle cx="833.5" cy="224.5" r="7.6" fill="#f0c020"/>
<path d="M833.5 224.5L833.5 216.9A7.6 7.6 0 0 1 841.1 224.5z" fill="#e83020"/>
<path d="M833.5 224.5L825.9 224.5A7.6 7.6 0 0 1 833.5 216.9z" fill="#3a78e8"/>
<path d="M833.5 224.5L833.5 232.1A7.6 7.6 0 0 1 825.9 224.5z" fill="#30b040"/>
<circle cx="833.5" cy="224.5" r="7.6" fill="url(#ballhl)"/>
<g transform="translate(825 240)"><rect x="1.500" y="5" width="12" height="12" fill="#f4f4f4" stroke="#555" stroke-width="1"/><path d="M3.500 9h8 M3.500 11.500h8 M3.500 14h8" stroke="#999" stroke-width="0.900"/><path d="M4 5l5-4.500l5.500 1l2 2.500l-4 3l-3.500-2.500l-3 2.500z" fill="#e8b070" stroke="#8a5a2a" stroke-width="0.700"/></g>
<path d="M843.300 70v3.500" stroke="#444" stroke-width="1.200"/><path d="M842.800 84v33" stroke="#c2c5d8" stroke-width="1"/>
</svg>
</body>
</html>
